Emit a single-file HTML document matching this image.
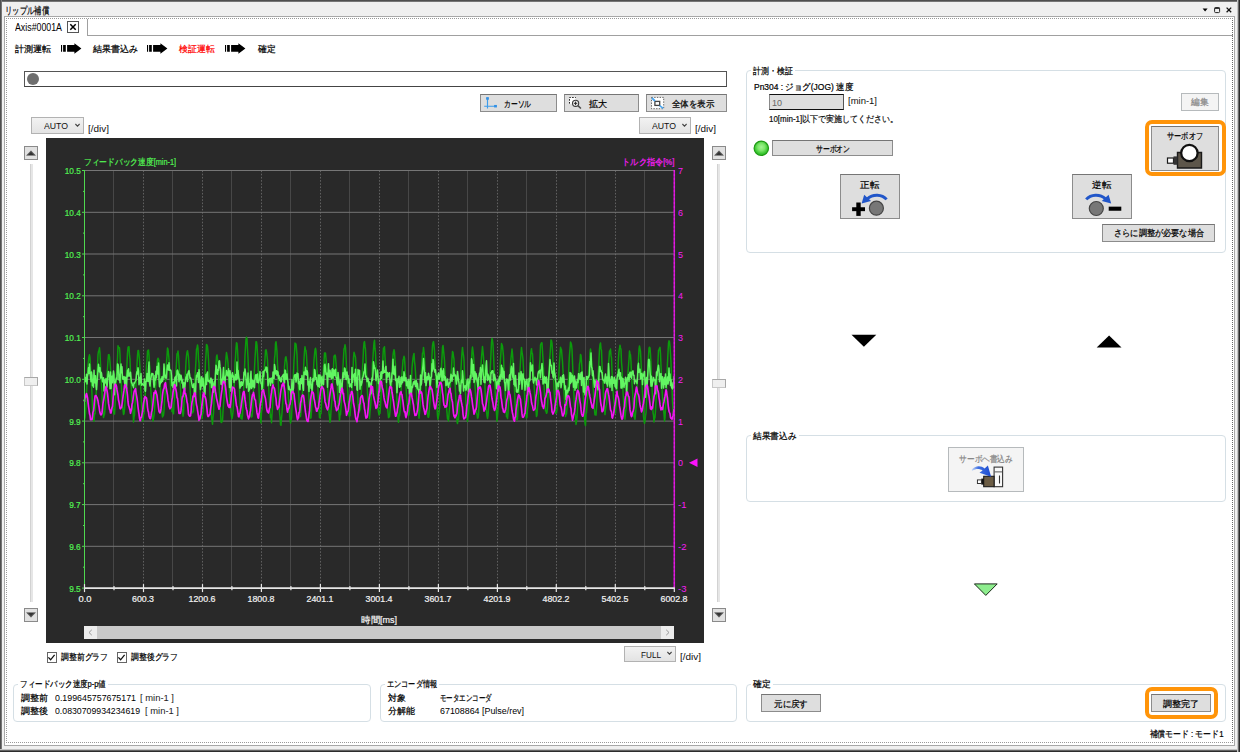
<!DOCTYPE html>
<html lang="ja"><head><meta charset="utf-8"><title>リップル補償</title>
<style>
html,body{margin:0;padding:0;}
body{width:1240px;height:752px;overflow:hidden;background:#fff;position:relative;font-family:"Liberation Sans", sans-serif;}
div,span,svg{position:absolute;box-sizing:border-box;}
.t{white-space:nowrap;line-height:14px;height:14px;font-family:"Liberation Sans", sans-serif;-webkit-text-stroke:0.22px currentColor;}
.btn{background:#dedede;border:1px solid #8c8c8c;border-top-color:#757575;}
.dis{background:#f4f4f4;border:1px solid #b6babc;}
.grp{border:1px solid #d5dfe5;border-radius:4px;}
.combo{border:1px solid #b2b2b2;background:linear-gradient(#f2f2f2,#e3e3e3);}
.hl{border:4px solid #ff9409;border-radius:7px;}
</style></head><body>
<div class="" style="left:0px;top:0px;width:1240px;height:752px;background:#f0f0f0;"></div>
<div class="" style="left:0px;top:0px;width:1240px;height:2px;background:linear-gradient(#3c3c3c,#8a8a8a);"></div>
<div class="" style="left:0px;top:0px;width:2px;height:752px;background:linear-gradient(90deg,#3c3c3c,#8a8a8a);"></div>
<div class="" style="left:0px;top:749px;width:1240px;height:3px;background:linear-gradient(#e2e2e2 0%,#a8a8a8 30%,#3a3a3a 62%,#222 100%);"></div>
<div class="" style="left:1237px;top:0px;width:3px;height:752px;background:linear-gradient(90deg,#e2e2e2 0%,#a8a8a8 35%,#3a3a3a 62%,#222 100%);"></div>
<div class="" style="left:4px;top:16px;width:1231px;height:730px;background:#fff;border:1px solid #a8a8a8;"></div>
<div class="" style="left:6px;top:18px;width:1227px;height:725px;border:1px dotted #999;border-right-color:#666;"></div>
<span id="t0" class="t" style="left:5px;transform-origin:0 50%;top:4.0px;font-size:9.5px;color:#000;font-weight:normal;transform:scaleX(0.7333);">リップル補償</span>
<svg style="left:1198px;top:4px" width="40" height="12" viewBox="0 0 40 12"><path d="M4.6 4.6 L9.6 4.6 L7.1 7.6 Z" fill="#000"/><rect x="16.6" y="3.6" width="5" height="5" rx="1" fill="none" stroke="#222" stroke-width="1"/><path d="M16.6 4.2 H21.6" stroke="#222" stroke-width="1.4"/><path d="M28.6 3.6 L33.2 8.2 M33.2 3.6 L28.6 8.2" stroke="#111" stroke-width="1.3"/></svg>
<div class="" style="left:87px;top:35px;width:1146px;height:1px;background:#a0a0a0;"></div>
<div class="" style="left:87px;top:19px;width:1px;height:17px;background:#a0a0a0;"></div>
<span id="t1" class="t" style="left:15px;transform-origin:0 50%;top:20.5px;font-size:10.21px;color:#000;font-weight:normal;transform:scaleX(0.8629);-webkit-text-stroke:0;">Axis#0001A</span>
<div class="" style="left:67px;top:21px;width:12px;height:12px;border:1px solid #555;background:#fff;"></div>
<svg style="left:67px;top:21px" width="12" height="12" viewBox="0 0 12 12"><path d="M3.3 3.3 L8.7 8.7 M8.7 3.3 L3.3 8.7" stroke="#000" stroke-width="1.5"/></svg>
<span id="t2" class="t" style="left:15px;transform-origin:0 50%;top:41.5px;font-size:9px;color:#000;font-weight:normal;transform:scaleX(1.0000);">計測運転</span>
<svg style="left:61px;top:43px" width="22" height="11" viewBox="0 0 22 11"><path d="M0 2.1 H1.1 V8.7 H0 Z M2.1 2.1 H4.8 V8.7 H2.1 Z M6.1 2.1 H13.4 V0.2 L20.4 5.4 L13.4 10.7 V8.7 H6.1 Z" fill="#000"/></svg>
<span id="t3" class="t" style="left:93px;transform-origin:0 50%;top:41.5px;font-size:9px;color:#000;font-weight:normal;transform:scaleX(1.0000);">結果書込み</span>
<svg style="left:147px;top:43px" width="22" height="11" viewBox="0 0 22 11"><path d="M0 2.1 H1.1 V8.7 H0 Z M2.1 2.1 H4.8 V8.7 H2.1 Z M6.1 2.1 H13.4 V0.2 L20.4 5.4 L13.4 10.7 V8.7 H6.1 Z" fill="#000"/></svg>
<span id="t4" class="t" style="left:179px;transform-origin:0 50%;top:41.5px;font-size:9px;color:#f00;font-weight:normal;transform:scaleX(0.9861);">検証運転</span>
<svg style="left:225px;top:43px" width="22" height="11" viewBox="0 0 22 11"><path d="M0 2.1 H1.1 V8.7 H0 Z M2.1 2.1 H4.8 V8.7 H2.1 Z M6.1 2.1 H13.4 V0.2 L20.4 5.4 L13.4 10.7 V8.7 H6.1 Z" fill="#000"/></svg>
<span id="t5" class="t" style="left:258px;transform-origin:0 50%;top:41.5px;font-size:9px;color:#000;font-weight:normal;transform:scaleX(0.9722);">確定</span>
<div class="" style="left:24px;top:71px;width:703px;height:16px;background:#fff;border:1px solid #555;border-bottom-color:#444;"></div>
<div class="" style="left:27px;top:73px;width:12px;height:12px;background:#6e6e6e;border-radius:50%;"></div>
<div class="btn" style="left:480px;top:94px;width:77px;height:18px;"></div>
<div class="btn" style="left:564px;top:94px;width:75px;height:18px;"></div>
<div class="btn" style="left:646px;top:94px;width:81px;height:18px;"></div>
<span id="t6" class="t" style="left:504px;transform-origin:0 50%;top:96.5px;font-size:9px;color:#000;font-weight:normal;transform:scaleX(0.7500);">カーソル</span>
<span id="t7" class="t" style="left:589px;transform-origin:0 50%;top:96.5px;font-size:9px;color:#000;font-weight:normal;transform:scaleX(1.0000);">拡大</span>
<span id="t8" class="t" style="left:672px;transform-origin:0 50%;top:96.6px;font-size:9px;color:#000;font-weight:normal;transform:scaleX(0.9444);">全体を表示</span>
<svg style="left:483px;top:96px" width="16" height="14" viewBox="0 0 16 14"><path d="M4.5 1.4 V12.6 M1.2 10.2 H13.6" stroke="#3d9cea" stroke-width="1.15" fill="none"/><rect x="3.1" y="1.2" width="2.8" height="2.5" fill="#3191e6"/><rect x="11.1" y="8.95" width="2.8" height="2.5" fill="#3191e6"/></svg>
<svg style="left:568px;top:96px" width="16" height="14" viewBox="0 0 16 14"><rect x="1.4" y="1.4" width="6.2" height="6.4" fill="#fff"/><path d="M1.5 7.6 V1.5 H7.8" stroke="#222" stroke-width="1" stroke-dasharray="1.6 1.3" fill="none"/><circle cx="7.6" cy="7.3" r="3.1" fill="#efefef" stroke="#3a3a3a" stroke-width="1.1"/><path d="M5.9 7.3 H9.3 M7.6 5.6 V9" stroke="#222" stroke-width="1"/><path d="M9.9 9.6 L12.9 12.5" stroke="#4a4a4a" stroke-width="1.5"/></svg>
<svg style="left:650px;top:96px" width="16" height="14" viewBox="0 0 16 14"><rect x="1.5" y="1.4" width="12.2" height="11.3" fill="#fff" stroke="#555" stroke-width="0.9" stroke-dasharray="1.4 1.3"/><rect x="4.9" y="5.4" width="4.8" height="4" fill="#fff" stroke="#444" stroke-width="1.3"/><path d="M2 2 L5 5 M9.6 9.6 L13.2 12.4" stroke="#4ca6ee" stroke-width="1.8"/></svg>
<div class="combo" style="left:31px;top:117px;width:53px;height:17px;"></div>
<span id="t9" class="t" style="left:44px;transform-origin:0 50%;top:119.0px;font-size:9.67px;color:#111;font-weight:normal;transform:scaleX(0.9004);-webkit-text-stroke:0;">AUTO</span>
<svg style="left:74px;top:122.5px" width="7" height="5" viewBox="0 0 7 5"><path d="M1.4 1 L3.5 3.2 L5.6 1" stroke="#444" stroke-width="1.1" fill="none"/></svg>
<span id="t10" class="t" style="left:88px;transform-origin:0 50%;top:121.5px;font-size:9.67px;color:#111;font-weight:normal;transform:scaleX(1.0291);-webkit-text-stroke:0;">[/div]</span>
<div class="combo" style="left:639px;top:117px;width:52px;height:17px;"></div>
<span id="t11" class="t" style="left:652px;transform-origin:0 50%;top:119.0px;font-size:9.67px;color:#111;font-weight:normal;transform:scaleX(0.9004);-webkit-text-stroke:0;">AUTO</span>
<svg style="left:681px;top:122.5px" width="7" height="5" viewBox="0 0 7 5"><path d="M1.4 1 L3.5 3.2 L5.6 1" stroke="#444" stroke-width="1.1" fill="none"/></svg>
<span id="t12" class="t" style="left:695px;transform-origin:0 50%;top:121.5px;font-size:9.67px;color:#111;font-weight:normal;transform:scaleX(1.0291);-webkit-text-stroke:0;">[/div]</span>
<div class="combo" style="left:624px;top:646px;width:52px;height:16px;"></div>
<span id="t13" class="t" style="left:641px;transform-origin:0 50%;top:647.5px;font-size:9.67px;color:#111;font-weight:normal;transform:scaleX(0.8466);-webkit-text-stroke:0;">FULL</span>
<svg style="left:666px;top:651.0px" width="7" height="5" viewBox="0 0 7 5"><path d="M1.4 1 L3.5 3.2 L5.6 1" stroke="#444" stroke-width="1.1" fill="none"/></svg>
<span id="t14" class="t" style="left:680px;transform-origin:0 50%;top:649.5px;font-size:9.67px;color:#111;font-weight:normal;transform:scaleX(1.0291);-webkit-text-stroke:0;">[/div]</span>
<div class="" style="left:24px;top:146px;width:14px;height:14px;background:#e1e1e1;border:1px solid #8a8a8a;"></div>
<svg style="left:24px;top:146px" width="14" height="14" viewBox="0 0 14 14"><path d="M2.2 9.6 L7 4.4 L11.8 9.6 Z" fill="#333"/><path d="M3.2 9.2 L7 5.2 L10.8 9.2" stroke="#777" stroke-width="1" fill="none"/></svg>
<div class="" style="left:30px;top:164px;width:3px;height:438px;background:#e6e6e6;border-left:1px solid #d2d2d2;"></div>
<div class="" style="left:24px;top:377px;width:14px;height:9px;background:#efefef;border:1px solid #a8a8a8;border-left-color:#c8c8c8;border-bottom-color:#c8c8c8;"></div>
<div class="" style="left:24px;top:608px;width:14px;height:14px;background:#e1e1e1;border:1px solid #8a8a8a;"></div>
<svg style="left:24px;top:608px" width="14" height="14" viewBox="0 0 14 14"><path d="M2.2 4.4 L7 9.6 L11.8 4.4 Z" fill="#333"/><path d="M3.2 4.8 L7 8.8 L10.8 4.8" stroke="#777" stroke-width="1" fill="none"/></svg>
<div class="" style="left:712px;top:146px;width:14px;height:14px;background:#e1e1e1;border:1px solid #8a8a8a;"></div>
<svg style="left:712px;top:146px" width="14" height="14" viewBox="0 0 14 14"><path d="M2.2 9.6 L7 4.4 L11.8 9.6 Z" fill="#333"/><path d="M3.2 9.2 L7 5.2 L10.8 9.2" stroke="#777" stroke-width="1" fill="none"/></svg>
<div class="" style="left:717px;top:164px;width:3px;height:438px;background:#e6e6e6;border-left:1px solid #d2d2d2;"></div>
<div class="" style="left:712px;top:379px;width:14px;height:9px;background:#efefef;border:1px solid #a8a8a8;border-left-color:#c8c8c8;border-bottom-color:#c8c8c8;"></div>
<div class="" style="left:712px;top:608px;width:14px;height:14px;background:#e1e1e1;border:1px solid #8a8a8a;"></div>
<svg style="left:712px;top:608px" width="14" height="14" viewBox="0 0 14 14"><path d="M2.2 4.4 L7 9.6 L11.8 4.4 Z" fill="#333"/><path d="M3.2 4.8 L7 8.8 L10.8 4.8" stroke="#777" stroke-width="1" fill="none"/></svg>
<div class="" style="left:46px;top:138px;width:658px;height:505px;background:#292929;"></div>
<svg style="left:46px;top:138px" width="658" height="505" viewBox="46 138 658 505"><path d="M113.5 170.5 V588.1" stroke="#474747" stroke-width="1"/><path d="M143.5 170.5 V588.1" stroke="#606060" stroke-width="1" stroke-dasharray="1.6 1.6"/><path d="M172.5 170.5 V588.1" stroke="#474747" stroke-width="1"/><path d="M202.5 170.5 V588.1" stroke="#606060" stroke-width="1" stroke-dasharray="1.6 1.6"/><path d="M231.5 170.5 V588.1" stroke="#474747" stroke-width="1"/><path d="M261.5 170.5 V588.1" stroke="#606060" stroke-width="1" stroke-dasharray="1.6 1.6"/><path d="M290.5 170.5 V588.1" stroke="#474747" stroke-width="1"/><path d="M320.5 170.5 V588.1" stroke="#606060" stroke-width="1" stroke-dasharray="1.6 1.6"/><path d="M349.5 170.5 V588.1" stroke="#474747" stroke-width="1"/><path d="M379.5 170.5 V588.1" stroke="#606060" stroke-width="1" stroke-dasharray="1.6 1.6"/><path d="M408.5 170.5 V588.1" stroke="#474747" stroke-width="1"/><path d="M438.5 170.5 V588.1" stroke="#606060" stroke-width="1" stroke-dasharray="1.6 1.6"/><path d="M467.5 170.5 V588.1" stroke="#474747" stroke-width="1"/><path d="M497.5 170.5 V588.1" stroke="#606060" stroke-width="1" stroke-dasharray="1.6 1.6"/><path d="M526.5 170.5 V588.1" stroke="#474747" stroke-width="1"/><path d="M556.5 170.5 V588.1" stroke="#606060" stroke-width="1" stroke-dasharray="1.6 1.6"/><path d="M585.5 170.5 V588.1" stroke="#474747" stroke-width="1"/><path d="M615.5 170.5 V588.1" stroke="#606060" stroke-width="1" stroke-dasharray="1.6 1.6"/><path d="M644.5 170.5 V588.1" stroke="#474747" stroke-width="1"/><path d="M84.5 170.5 H674.3" stroke="#767676" stroke-width="1"/><path d="M84.5 212.3 H674.3" stroke="#767676" stroke-width="1"/><path d="M84.5 254.0 H674.3" stroke="#767676" stroke-width="1"/><path d="M84.5 295.8 H674.3" stroke="#767676" stroke-width="1"/><path d="M84.5 337.5 H674.3" stroke="#767676" stroke-width="1"/><path d="M84.5 379.3 H674.3" stroke="#767676" stroke-width="1"/><path d="M84.5 421.1 H674.3" stroke="#767676" stroke-width="1"/><path d="M84.5 462.8 H674.3" stroke="#767676" stroke-width="1"/><path d="M84.5 504.6 H674.3" stroke="#767676" stroke-width="1"/><path d="M84.5 546.3 H674.3" stroke="#767676" stroke-width="1"/><path d="M84.5 419.5 L85.0 417.9 L85.5 413.1 L86.0 404.5 L86.5 393.7 L87.0 379.7 L87.5 374.9 L88.0 365.2 L88.5 360.4 L89.0 356.6 L89.5 354.8 L90.0 357.9 L90.5 368.0 L91.0 373.7 L91.5 384.0 L92.0 394.5 L92.5 407.4 L93.0 416.3 L93.5 420.1 L94.0 421.3 L94.5 413.6 L95.0 413.9 L95.5 404.8 L96.0 396.6 L96.5 388.4 L97.0 373.4 L97.5 366.6 L98.0 354.5 L98.5 351.3 L99.0 350.5 L99.5 347.8 L100.0 353.4 L100.5 364.3 L101.0 376.3 L101.5 384.2 L102.0 392.7 L102.5 405.5 L103.0 410.6 L103.5 417.5 L104.0 415.7 L104.5 414.2 L105.0 409.1 L105.5 402.8 L106.0 392.2 L106.5 383.1 L107.0 374.6 L107.5 368.3 L108.0 360.5 L108.5 354.8 L109.0 354.6 L109.5 356.6 L110.0 361.8 L110.5 368.5 L111.0 380.1 L111.5 386.1 L112.0 397.2 L112.5 406.7 L113.0 407.1 L113.5 411.2 L114.0 414.0 L114.5 414.1 L115.0 405.2 L115.5 398.2 L116.0 388.7 L116.5 375.9 L117.0 366.1 L117.5 358.1 L118.0 345.8 L118.5 347.8 L119.0 347.6 L119.5 347.7 L120.0 354.5 L120.5 369.1 L121.0 378.1 L121.5 388.0 L122.0 396.7 L122.5 407.2 L123.0 409.8 L123.5 414.4 L124.0 413.7 L124.5 408.8 L125.0 402.2 L125.5 393.0 L126.0 384.7 L126.5 373.0 L127.0 363.5 L127.5 353.1 L128.0 347.7 L128.5 346.7 L129.0 346.7 L129.5 355.2 L130.0 359.2 L130.5 372.9 L131.0 380.2 L131.5 392.8 L132.0 400.9 L132.5 404.8 L133.0 409.1 L133.5 422.0 L134.0 417.2 L134.5 415.1 L135.0 405.2 L135.5 396.2 L136.0 384.2 L136.5 372.4 L137.0 365.1 L137.5 355.5 L138.0 350.6 L138.5 350.6 L139.0 354.9 L139.5 359.8 L140.0 368.4 L140.5 382.9 L141.0 393.3 L141.5 402.6 L142.0 410.6 L142.5 416.3 L143.0 421.3 L143.5 413.9 L144.0 413.8 L144.5 405.2 L145.0 399.1 L145.5 386.9 L146.0 380.2 L146.5 365.9 L147.0 361.3 L147.5 351.2 L148.0 350.4 L148.5 350.0 L149.0 355.9 L149.5 364.4 L150.0 368.5 L150.5 383.8 L151.0 392.5 L151.5 400.1 L152.0 410.6 L152.5 417.6 L153.0 421.0 L153.5 418.3 L154.0 415.3 L154.5 411.1 L155.0 402.1 L155.5 388.0 L156.0 381.1 L156.5 372.0 L157.0 366.2 L157.5 359.8 L158.0 358.2 L158.5 359.2 L159.0 361.5 L159.5 368.2 L160.0 382.7 L160.5 388.5 L161.0 402.2 L161.5 408.0 L162.0 412.8 L162.5 417.0 L163.0 416.0 L163.5 415.1 L164.0 410.1 L164.5 401.4 L165.0 394.3 L165.5 383.2 L166.0 369.2 L166.5 362.7 L167.0 356.0 L167.5 348.1 L168.0 349.3 L168.5 354.1 L169.0 359.0 L169.5 364.8 L170.0 375.5 L170.5 386.3 L171.0 393.7 L171.5 401.3 L172.0 411.6 L172.5 409.8 L173.0 412.4 L173.5 413.7 L174.0 403.0 L174.5 400.0 L175.0 387.4 L175.5 378.5 L176.0 370.6 L176.5 361.9 L177.0 353.9 L177.5 353.4 L178.0 351.0 L178.5 355.9 L179.0 363.8 L179.5 372.5 L180.0 380.8 L180.5 388.2 L181.0 400.2 L181.5 403.3 L182.0 408.2 L182.5 411.5 L183.0 416.2 L183.5 413.6 L184.0 401.9 L184.5 398.3 L185.0 383.1 L185.5 372.1 L186.0 362.1 L186.5 355.6 L187.0 352.3 L187.5 350.7 L188.0 353.4 L188.5 357.3 L189.0 365.0 L189.5 375.2 L190.0 386.0 L190.5 396.0 L191.0 407.1 L191.5 408.8 L192.0 413.1 L192.5 412.8 L193.0 412.1 L193.5 411.0 L194.0 399.4 L194.5 391.9 L195.0 376.7 L195.5 368.8 L196.0 360.5 L196.5 349.3 L197.0 348.0 L197.5 344.9 L198.0 348.4 L198.5 359.3 L199.0 363.2 L199.5 378.3 L200.0 388.3 L200.5 400.5 L201.0 406.8 L201.5 413.2 L202.0 418.8 L202.5 413.5 L203.0 413.1 L203.5 404.8 L204.0 393.5 L204.5 383.8 L205.0 376.5 L205.5 361.2 L206.0 355.1 L206.5 344.5 L207.0 345.0 L207.5 346.5 L208.0 352.1 L208.5 359.5 L209.0 370.0 L209.5 378.9 L210.0 392.5 L210.5 403.0 L211.0 410.0 L211.5 416.5 L212.0 420.6 L212.5 424.2 L213.0 416.8 L213.5 413.2 L214.0 400.2 L214.5 391.0 L215.0 379.0 L215.5 371.6 L216.0 364.7 L216.5 356.6 L217.0 354.9 L217.5 359.7 L218.0 360.7 L218.5 369.9 L219.0 384.2 L219.5 393.3 L220.0 404.6 L220.5 411.3 L221.0 421.9 L221.5 422.5 L222.0 421.5 L222.5 421.0 L223.0 411.3 L223.5 404.4 L224.0 398.5 L224.5 384.9 L225.0 374.6 L225.5 365.9 L226.0 357.6 L226.5 352.6 L227.0 355.4 L227.5 358.7 L228.0 363.1 L228.5 370.6 L229.0 380.0 L229.5 392.1 L230.0 404.0 L230.5 408.6 L231.0 412.8 L231.5 416.0 L232.0 418.5 L232.5 415.8 L233.0 411.6 L233.5 400.7 L234.0 390.6 L234.5 379.8 L235.0 362.9 L235.5 357.4 L236.0 348.2 L236.5 342.8 L237.0 343.4 L237.5 349.5 L238.0 359.7 L238.5 369.5 L239.0 382.3 L239.5 390.2 L240.0 399.8 L240.5 412.0 L241.0 418.4 L241.5 418.4 L242.0 419.1 L242.5 415.2 L243.0 404.7 L243.5 392.4 L244.0 380.6 L244.5 369.1 L245.0 355.0 L245.5 346.9 L246.0 339.3 L246.5 337.3 L247.0 339.0 L247.5 349.4 L248.0 357.9 L248.5 371.1 L249.0 383.0 L249.5 393.2 L250.0 405.8 L250.5 414.6 L251.0 415.5 L251.5 417.1 L252.0 416.3 L252.5 411.8 L253.0 400.1 L253.5 389.5 L254.0 379.3 L254.5 368.5 L255.0 358.3 L255.5 350.2 L256.0 341.8 L256.5 341.8 L257.0 345.3 L257.5 354.1 L258.0 363.2 L258.5 377.3 L259.0 390.3 L259.5 403.0 L260.0 412.7 L260.5 417.6 L261.0 422.9 L261.5 412.0 L262.0 409.6 L262.5 402.5 L263.0 394.0 L263.5 388.8 L264.0 378.8 L264.5 365.4 L265.0 359.0 L265.5 350.4 L266.0 349.7 L266.5 351.5 L267.0 355.7 L267.5 360.1 L268.0 372.2 L268.5 383.2 L269.0 394.5 L269.5 400.4 L270.0 411.5 L270.5 417.6 L271.0 415.0 L271.5 422.7 L272.0 414.2 L272.5 407.3 L273.0 396.9 L273.5 384.2 L274.0 373.6 L274.5 358.8 L275.0 354.5 L275.5 343.5 L276.0 341.7 L276.5 346.3 L277.0 352.1 L277.5 364.8 L278.0 373.4 L278.5 386.0 L279.0 400.1 L279.5 412.4 L280.0 416.6 L280.5 424.8 L281.0 425.2 L281.5 418.2 L282.0 413.0 L282.5 405.2 L283.0 398.8 L283.5 390.1 L284.0 380.0 L284.5 366.8 L285.0 361.1 L285.5 357.4 L286.0 356.8 L286.5 360.0 L287.0 363.6 L287.5 372.6 L288.0 385.1 L288.5 397.7 L289.0 403.8 L289.5 413.4 L290.0 419.1 L290.5 423.1 L291.0 420.0 L291.5 418.1 L292.0 406.6 L292.5 400.8 L293.0 385.6 L293.5 372.6 L294.0 360.2 L294.5 353.5 L295.0 343.0 L295.5 343.9 L296.0 343.9 L296.5 349.1 L297.0 355.0 L297.5 368.7 L298.0 380.5 L298.5 388.8 L299.0 400.8 L299.5 410.4 L300.0 413.0 L300.5 416.5 L301.0 411.5 L301.5 407.2 L302.0 401.5 L302.5 392.2 L303.0 381.1 L303.5 369.8 L304.0 359.2 L304.5 351.3 L305.0 346.8 L305.5 350.1 L306.0 350.6 L306.5 355.9 L307.0 364.2 L307.5 373.6 L308.0 380.1 L308.5 389.7 L309.0 398.6 L309.5 406.3 L310.0 410.9 L310.5 418.2 L311.0 417.9 L311.5 410.1 L312.0 400.2 L312.5 391.3 L313.0 381.7 L313.5 369.6 L314.0 360.2 L314.5 354.6 L315.0 349.8 L315.5 348.2 L316.0 350.9 L316.5 359.7 L317.0 369.7 L317.5 378.3 L318.0 391.9 L318.5 401.7 L319.0 408.6 L319.5 417.6 L320.0 417.8 L320.5 413.4 L321.0 413.7 L321.5 404.2 L322.0 396.8 L322.5 388.2 L323.0 378.0 L323.5 367.7 L324.0 362.8 L324.5 353.1 L325.0 353.0 L325.5 353.0 L326.0 358.4 L326.5 364.6 L327.0 374.6 L327.5 383.7 L328.0 396.3 L328.5 404.7 L329.0 412.8 L329.5 416.6 L330.0 422.2 L330.5 419.4 L331.0 410.8 L331.5 404.8 L332.0 398.9 L332.5 385.5 L333.0 378.6 L333.5 366.8 L334.0 356.1 L334.5 356.8 L335.0 355.0 L335.5 356.8 L336.0 363.1 L336.5 369.3 L337.0 377.4 L337.5 389.1 L338.0 398.5 L338.5 408.6 L339.0 412.8 L339.5 420.4 L340.0 414.9 L340.5 414.7 L341.0 407.6 L341.5 398.6 L342.0 391.6 L342.5 377.2 L343.0 366.0 L343.5 357.8 L344.0 349.1 L344.5 347.7 L345.0 344.8 L345.5 347.5 L346.0 355.8 L346.5 367.7 L347.0 377.3 L347.5 386.6 L348.0 396.1 L348.5 407.0 L349.0 414.5 L349.5 416.3 L350.0 415.6 L350.5 409.5 L351.0 405.7 L351.5 397.8 L352.0 391.6 L352.5 376.4 L353.0 370.3 L353.5 358.0 L354.0 352.2 L354.5 354.0 L355.0 355.7 L355.5 357.4 L356.0 366.6 L356.5 375.1 L357.0 382.3 L357.5 391.3 L358.0 402.8 L358.5 409.1 L359.0 412.6 L359.5 411.2 L360.0 409.9 L360.5 409.1 L361.0 396.6 L361.5 389.3 L362.0 380.2 L362.5 368.4 L363.0 360.4 L363.5 349.0 L364.0 342.7 L364.5 341.6 L365.0 346.2 L365.5 349.5 L366.0 360.8 L366.5 369.1 L367.0 383.2 L367.5 392.9 L368.0 400.1 L368.5 404.1 L369.0 409.8 L369.5 418.5 L370.0 411.2 L370.5 407.6 L371.0 400.4 L371.5 385.0 L372.0 377.4 L372.5 363.2 L373.0 357.3 L373.5 349.0 L374.0 342.6 L374.5 340.3 L375.0 348.7 L375.5 352.7 L376.0 366.4 L376.5 376.9 L377.0 386.3 L377.5 400.2 L378.0 408.1 L378.5 412.1 L379.0 414.9 L379.5 413.0 L380.0 413.3 L380.5 406.3 L381.0 396.2 L381.5 386.8 L382.0 374.3 L382.5 366.2 L383.0 355.0 L383.5 347.9 L384.0 347.9 L384.5 346.7 L385.0 356.7 L385.5 365.1 L386.0 374.3 L386.5 383.2 L387.0 397.0 L387.5 407.1 L388.0 412.2 L388.5 417.7 L389.0 416.9 L389.5 416.7 L390.0 410.9 L390.5 404.0 L391.0 393.6 L391.5 386.6 L392.0 370.9 L392.5 361.6 L393.0 355.2 L393.5 351.7 L394.0 349.7 L394.5 352.0 L395.0 359.9 L395.5 364.4 L396.0 375.7 L396.5 388.7 L397.0 401.9 L397.5 409.4 L398.0 417.5 L398.5 422.3 L399.0 416.1 L399.5 415.8 L400.0 411.7 L400.5 403.8 L401.0 395.3 L401.5 382.3 L402.0 373.9 L402.5 366.7 L403.0 360.4 L403.5 358.5 L404.0 356.3 L404.5 357.9 L405.0 366.1 L405.5 375.4 L406.0 386.1 L406.5 395.7 L407.0 400.5 L407.5 406.2 L408.0 414.7 L408.5 415.4 L409.0 414.7 L409.5 410.0 L410.0 404.6 L410.5 395.9 L411.0 388.4 L411.5 378.8 L412.0 367.9 L412.5 362.6 L413.0 358.1 L413.5 355.2 L414.0 353.4 L414.5 361.3 L415.0 365.7 L415.5 372.2 L416.0 382.0 L416.5 393.5 L417.0 403.8 L417.5 404.9 L418.0 408.3 L418.5 411.4 L419.0 418.2 L419.5 412.8 L420.0 406.9 L420.5 396.0 L421.0 385.5 L421.5 371.3 L422.0 362.1 L422.5 353.0 L423.0 353.0 L423.5 347.4 L424.0 352.1 L424.5 357.4 L425.0 368.0 L425.5 377.4 L426.0 390.2 L426.5 399.2 L427.0 408.1 L427.5 412.6 L428.0 416.9 L428.5 417.3 L429.0 415.0 L429.5 406.6 L430.0 400.9 L430.5 387.2 L431.0 378.7 L431.5 362.8 L432.0 355.1 L432.5 345.6 L433.0 342.7 L433.5 341.6 L434.0 345.4 L434.5 351.3 L435.0 361.8 L435.5 375.3 L436.0 385.4 L436.5 397.9 L437.0 406.1 L437.5 416.1 L438.0 419.5 L438.5 416.3 L439.0 413.5 L439.5 408.3 L440.0 398.4 L440.5 387.6 L441.0 375.7 L441.5 366.4 L442.0 357.3 L442.5 347.4 L443.0 345.4 L443.5 349.9 L444.0 355.0 L444.5 360.6 L445.0 371.9 L445.5 383.3 L446.0 397.5 L446.5 406.8 L447.0 412.4 L447.5 419.0 L448.0 418.1 L448.5 421.0 L449.0 414.0 L449.5 407.7 L450.0 395.7 L450.5 383.8 L451.0 373.1 L451.5 368.0 L452.0 358.2 L452.5 351.5 L453.0 352.4 L453.5 356.5 L454.0 359.3 L454.5 371.5 L455.0 381.0 L455.5 390.9 L456.0 402.0 L456.5 412.0 L457.0 421.3 L457.5 423.5 L458.0 419.7 L458.5 419.8 L459.0 409.3 L459.5 402.1 L460.0 390.9 L460.5 378.9 L461.0 369.3 L461.5 360.0 L462.0 352.5 L462.5 347.4 L463.0 352.7 L463.5 355.3 L464.0 360.4 L464.5 373.5 L465.0 383.8 L465.5 392.1 L466.0 405.2 L466.5 409.5 L467.0 415.6 L467.5 421.4 L468.0 417.2 L468.5 414.3 L469.0 406.2 L469.5 400.0 L470.0 389.9 L470.5 377.8 L471.0 367.2 L471.5 360.8 L472.0 350.9 L472.5 347.0 L473.0 351.1 L473.5 355.6 L474.0 362.7 L474.5 372.5 L475.0 386.2 L475.5 392.7 L476.0 403.1 L476.5 413.0 L477.0 414.1 L477.5 418.2 L478.0 417.9 L478.5 414.7 L479.0 404.6 L479.5 393.1 L480.0 384.4 L480.5 372.7 L481.0 364.9 L481.5 357.3 L482.0 351.7 L482.5 346.6 L483.0 351.6 L483.5 357.0 L484.0 366.2 L484.5 373.9 L485.0 387.6 L485.5 399.5 L486.0 406.8 L486.5 410.9 L487.0 415.9 L487.5 418.4 L488.0 415.7 L488.5 408.5 L489.0 397.5 L489.5 387.0 L490.0 374.5 L490.5 363.6 L491.0 353.0 L491.5 342.3 L492.0 338.4 L492.5 340.5 L493.0 344.7 L493.5 355.3 L494.0 366.3 L494.5 376.6 L495.0 387.5 L495.5 397.4 L496.0 407.7 L496.5 413.4 L497.0 421.2 L497.5 415.9 L498.0 409.7 L498.5 402.0 L499.0 392.9 L499.5 380.1 L500.0 369.4 L500.5 358.9 L501.0 351.6 L501.5 343.6 L502.0 344.8 L502.5 346.4 L503.0 351.1 L503.5 356.3 L504.0 371.9 L504.5 382.8 L505.0 391.5 L505.5 400.7 L506.0 409.1 L506.5 416.8 L507.0 416.0 L507.5 418.4 L508.0 412.6 L508.5 402.7 L509.0 394.7 L509.5 386.5 L510.0 377.0 L510.5 364.9 L511.0 358.1 L511.5 353.7 L512.0 349.0 L512.5 353.7 L513.0 360.9 L513.5 369.6 L514.0 383.0 L514.5 389.1 L515.0 400.9 L515.5 408.8 L516.0 415.9 L516.5 419.1 L517.0 419.9 L517.5 418.8 L518.0 407.5 L518.5 403.4 L519.0 393.8 L519.5 380.8 L520.0 370.8 L520.5 361.4 L521.0 353.1 L521.5 347.4 L522.0 352.0 L522.5 355.0 L523.0 359.4 L523.5 368.9 L524.0 385.0 L524.5 392.2 L525.0 405.3 L525.5 411.0 L526.0 414.7 L526.5 418.1 L527.0 417.4 L527.5 409.3 L528.0 406.7 L528.5 395.4 L529.0 387.1 L529.5 378.2 L530.0 365.6 L530.5 357.5 L531.0 351.3 L531.5 348.7 L532.0 353.1 L532.5 353.9 L533.0 363.5 L533.5 372.2 L534.0 383.9 L534.5 391.7 L535.0 402.9 L535.5 408.8 L536.0 410.1 L536.5 416.6 L537.0 415.2 L537.5 407.4 L538.0 402.8 L538.5 389.9 L539.0 379.4 L539.5 365.4 L540.0 359.0 L540.5 345.1 L541.0 343.8 L541.5 342.7 L542.0 343.0 L542.5 351.4 L543.0 359.6 L543.5 368.4 L544.0 384.0 L544.5 395.0 L545.0 401.8 L545.5 410.9 L546.0 410.7 L546.5 413.3 L547.0 412.5 L547.5 407.1 L548.0 396.4 L548.5 387.0 L549.0 371.9 L549.5 360.0 L550.0 355.1 L550.5 348.0 L551.0 340.1 L551.5 340.6 L552.0 343.4 L552.5 350.6 L553.0 361.8 L553.5 374.9 L554.0 388.8 L554.5 398.1 L555.0 405.6 L555.5 413.2 L556.0 412.5 L556.5 413.0 L557.0 409.3 L557.5 399.7 L558.0 395.2 L558.5 385.9 L559.0 372.4 L559.5 361.8 L560.0 354.6 L560.5 347.3 L561.0 348.6 L561.5 349.8 L562.0 356.3 L562.5 361.5 L563.0 371.3 L563.5 384.4 L564.0 391.3 L564.5 401.0 L565.0 408.9 L565.5 416.5 L566.0 414.3 L566.5 414.0 L567.0 407.9 L567.5 398.9 L568.0 389.7 L568.5 378.7 L569.0 363.1 L569.5 354.9 L570.0 349.1 L570.5 342.1 L571.0 343.0 L571.5 344.9 L572.0 349.3 L572.5 362.0 L573.0 375.1 L573.5 387.3 L574.0 396.3 L574.5 406.7 L575.0 413.4 L575.5 415.4 L576.0 424.4 L576.5 421.5 L577.0 417.7 L577.5 409.1 L578.0 397.7 L578.5 383.5 L579.0 372.7 L579.5 363.9 L580.0 361.6 L580.5 354.4 L581.0 355.3 L581.5 361.0 L582.0 369.5 L582.5 378.1 L583.0 390.8 L583.5 399.2 L584.0 407.8 L584.5 417.6 L585.0 423.3 L585.5 425.5 L586.0 414.0 L586.5 412.6 L587.0 405.3 L587.5 399.2 L588.0 385.1 L588.5 375.1 L589.0 365.7 L589.5 361.3 L590.0 352.8 L590.5 349.0 L591.0 352.6 L591.5 358.8 L592.0 366.6 L592.5 374.5 L593.0 386.0 L593.5 392.7 L594.0 406.0 L594.5 410.2 L595.0 414.8 L595.5 413.7 L596.0 415.1 L596.5 408.3 L597.0 398.9 L597.5 388.7 L598.0 376.7 L598.5 370.4 L599.0 360.3 L599.5 349.2 L600.0 344.6 L600.5 342.9 L601.0 348.4 L601.5 350.6 L602.0 364.4 L602.5 373.2 L603.0 381.4 L603.5 396.8 L604.0 401.0 L604.5 408.8 L605.0 414.6 L605.5 409.7 L606.0 406.1 L606.5 404.1 L607.0 395.5 L607.5 385.1 L608.0 378.8 L608.5 364.4 L609.0 358.3 L609.5 351.0 L610.0 351.8 L610.5 349.1 L611.0 355.4 L611.5 357.8 L612.0 371.2 L612.5 379.0 L613.0 390.4 L613.5 398.0 L614.0 401.9 L614.5 407.9 L615.0 408.6 L615.5 412.9 L616.0 405.3 L616.5 400.4 L617.0 392.6 L617.5 381.4 L618.0 369.9 L618.5 357.6 L619.0 351.5 L619.5 348.3 L620.0 345.2 L620.5 347.9 L621.0 349.3 L621.5 362.4 L622.0 367.8 L622.5 381.9 L623.0 392.1 L623.5 399.8 L624.0 409.4 L624.5 410.7 L625.0 419.2 L625.5 412.0 L626.0 409.1 L626.5 401.3 L627.0 397.0 L627.5 384.6 L628.0 372.5 L628.5 365.8 L629.0 359.5 L629.5 351.0 L630.0 353.4 L630.5 354.9 L631.0 361.8 L631.5 373.6 L632.0 383.4 L632.5 390.5 L633.0 399.3 L633.5 408.2 L634.0 416.5 L634.5 417.2 L635.0 419.3 L635.5 413.6 L636.0 408.0 L636.5 401.3 L637.0 387.9 L637.5 379.4 L638.0 366.5 L638.5 358.6 L639.0 349.2 L639.5 345.9 L640.0 348.6 L640.5 351.3 L641.0 361.3 L641.5 372.2 L642.0 384.2 L642.5 393.4 L643.0 403.4 L643.5 416.3 L644.0 420.6 L644.5 423.3 L645.0 421.2 L645.5 416.2 L646.0 412.8 L646.5 400.4 L647.0 386.0 L647.5 377.7 L648.0 364.4 L648.5 356.0 L649.0 348.2 L649.5 347.2 L650.0 347.9 L650.5 354.6 L651.0 363.9 L651.5 377.8 L652.0 387.2 L652.5 397.1 L653.0 412.5 L653.5 415.0 L654.0 421.9 L654.5 418.8 L655.0 417.2 L655.5 410.4 L656.0 401.7 L656.5 393.2 L657.0 380.3 L657.5 369.8 L658.0 361.1 L658.5 350.3 L659.0 349.9 L659.5 348.3 L660.0 347.3 L660.5 353.8 L661.0 365.7 L661.5 376.5 L662.0 388.2 L662.5 397.4 L663.0 404.0 L663.5 410.2 L664.0 413.8 L664.5 421.1 L665.0 417.7 L665.5 407.6 L666.0 398.7 L666.5 388.5 L667.0 374.0 L667.5 362.4 L668.0 352.5 L668.5 343.1 L669.0 340.8 L669.5 341.6 L670.0 346.4 L670.5 353.7 L671.0 362.5 L671.5 379.8 L672.0 387.7 L672.5 401.6 L673.0 408.1 L673.5 418.1 L674.0 418.5" stroke="#0c9a0c" stroke-width="1.5" fill="none" stroke-linejoin="round"/><path d="M84.5 383.1 L85.0 379.7 L85.5 377.4 L86.0 381.5 L86.5 374.3 L87.0 384.0 L87.5 375.7 L88.0 373.9 L88.5 367.7 L89.0 373.2 L89.5 364.0 L90.0 373.2 L90.5 376.6 L91.0 381.7 L91.5 371.9 L92.0 375.7 L92.5 385.8 L93.0 380.0 L93.5 387.2 L94.0 370.3 L94.5 382.2 L95.0 382.9 L95.5 375.7 L96.0 386.4 L96.5 389.6 L97.0 382.8 L97.5 377.5 L98.0 370.3 L98.5 364.3 L99.0 368.5 L99.5 372.0 L100.0 367.7 L100.5 378.1 L101.0 372.2 L101.5 373.2 L102.0 377.2 L102.5 381.4 L103.0 382.0 L103.5 377.7 L104.0 390.9 L104.5 380.1 L105.0 383.0 L105.5 382.3 L106.0 378.4 L106.5 382.9 L107.0 387.1 L107.5 381.9 L108.0 374.3 L108.5 371.4 L109.0 376.6 L109.5 376.6 L110.0 388.7 L110.5 372.0 L111.0 388.4 L111.5 380.6 L112.0 376.2 L112.5 382.7 L113.0 375.6 L113.5 371.1 L114.0 374.4 L114.5 394.7 L115.0 382.3 L115.5 382.4 L116.0 379.6 L116.5 377.8 L117.0 379.1 L117.5 364.1 L118.0 364.2 L118.5 366.9 L119.0 379.9 L119.5 375.4 L120.0 382.7 L120.5 371.1 L121.0 364.0 L121.5 372.7 L122.0 366.7 L122.5 378.2 L123.0 379.0 L123.5 379.2 L124.0 376.4 L124.5 382.3 L125.0 384.6 L125.5 377.2 L126.0 378.2 L126.5 388.8 L127.0 376.1 L127.5 370.2 L128.0 376.4 L128.5 368.8 L129.0 375.6 L129.5 373.9 L130.0 376.3 L130.5 372.2 L131.0 378.3 L131.5 383.0 L132.0 382.8 L132.5 385.6 L133.0 384.8 L133.5 387.7 L134.0 382.7 L134.5 383.3 L135.0 382.0 L135.5 381.0 L136.0 380.1 L136.5 374.3 L137.0 371.7 L137.5 374.0 L138.0 367.7 L138.5 371.0 L139.0 384.8 L139.5 377.4 L140.0 383.0 L140.5 379.6 L141.0 373.6 L141.5 385.2 L142.0 384.4 L142.5 383.9 L143.0 385.0 L143.5 384.7 L144.0 385.4 L144.5 379.0 L145.0 390.6 L145.5 391.1 L146.0 381.5 L146.5 381.3 L147.0 373.6 L147.5 377.0 L148.0 381.4 L148.5 369.2 L149.0 362.0 L149.5 383.2 L150.0 386.1 L150.5 380.2 L151.0 377.8 L151.5 374.4 L152.0 373.4 L152.5 374.6 L153.0 373.9 L153.5 381.3 L154.0 387.3 L154.5 384.9 L155.0 375.6 L155.5 379.9 L156.0 371.2 L156.5 377.6 L157.0 366.4 L157.5 366.4 L158.0 373.9 L158.5 363.1 L159.0 379.6 L159.5 386.7 L160.0 382.6 L160.5 383.7 L161.0 379.0 L161.5 382.3 L162.0 376.7 L162.5 381.2 L163.0 379.3 L163.5 375.2 L164.0 363.9 L164.5 372.5 L165.0 378.0 L165.5 377.5 L166.0 375.3 L166.5 378.1 L167.0 368.9 L167.5 364.9 L168.0 366.1 L168.5 370.1 L169.0 362.8 L169.5 370.2 L170.0 370.2 L170.5 370.1 L171.0 370.7 L171.5 375.7 L172.0 385.7 L172.5 382.8 L173.0 387.4 L173.5 381.9 L174.0 383.6 L174.5 380.9 L175.0 377.2 L175.5 380.7 L176.0 376.2 L176.5 386.0 L177.0 370.9 L177.5 370.1 L178.0 371.4 L178.5 375.4 L179.0 381.8 L179.5 374.3 L180.0 378.8 L180.5 379.8 L181.0 375.2 L181.5 377.8 L182.0 383.1 L182.5 380.2 L183.0 387.9 L183.5 387.1 L184.0 382.7 L184.5 390.7 L185.0 385.3 L185.5 381.4 L186.0 377.0 L186.5 378.1 L187.0 374.2 L187.5 381.5 L188.0 373.5 L188.5 371.4 L189.0 370.6 L189.5 374.2 L190.0 378.2 L190.5 377.5 L191.0 378.9 L191.5 381.8 L192.0 385.0 L192.5 387.4 L193.0 387.3 L193.5 385.2 L194.0 383.5 L194.5 396.5 L195.0 389.4 L195.5 394.6 L196.0 379.6 L196.5 375.3 L197.0 376.9 L197.5 372.7 L198.0 375.5 L198.5 382.5 L199.0 369.7 L199.5 376.0 L200.0 382.2 L200.5 389.6 L201.0 385.7 L201.5 376.7 L202.0 386.1 L202.5 383.7 L203.0 378.0 L203.5 384.8 L204.0 388.0 L204.5 393.5 L205.0 394.2 L205.5 381.5 L206.0 374.4 L206.5 384.6 L207.0 373.4 L207.5 371.9 L208.0 381.0 L208.5 381.4 L209.0 380.8 L209.5 380.7 L210.0 382.7 L210.5 379.0 L211.0 378.1 L211.5 387.6 L212.0 379.4 L212.5 382.1 L213.0 384.9 L213.5 392.3 L214.0 387.0 L214.5 381.3 L215.0 386.6 L215.5 373.4 L216.0 365.2 L216.5 366.7 L217.0 373.9 L217.5 374.3 L218.0 369.5 L218.5 370.4 L219.0 361.4 L219.5 360.9 L220.0 366.4 L220.5 369.4 L221.0 384.2 L221.5 379.3 L222.0 384.8 L222.5 381.6 L223.0 374.0 L223.5 367.6 L224.0 380.0 L224.5 379.3 L225.0 382.5 L225.5 376.2 L226.0 375.9 L226.5 370.6 L227.0 373.0 L227.5 374.7 L228.0 376.1 L228.5 368.7 L229.0 376.5 L229.5 387.5 L230.0 370.7 L230.5 374.7 L231.0 391.2 L231.5 378.9 L232.0 375.3 L232.5 372.8 L233.0 377.0 L233.5 375.9 L234.0 382.5 L234.5 377.2 L235.0 380.1 L235.5 374.4 L236.0 375.7 L236.5 379.7 L237.0 361.9 L237.5 378.2 L238.0 370.6 L238.5 375.8 L239.0 379.0 L239.5 380.7 L240.0 388.1 L240.5 382.5 L241.0 386.5 L241.5 381.7 L242.0 383.5 L242.5 385.3 L243.0 383.1 L243.5 380.7 L244.0 372.3 L244.5 374.8 L245.0 369.0 L245.5 372.6 L246.0 378.1 L246.5 387.7 L247.0 380.1 L247.5 384.4 L248.0 373.1 L248.5 391.2 L249.0 383.6 L249.5 389.8 L250.0 387.3 L250.5 377.6 L251.0 371.2 L251.5 388.5 L252.0 385.9 L252.5 380.6 L253.0 386.7 L253.5 385.0 L254.0 380.6 L254.5 387.8 L255.0 379.3 L255.5 375.3 L256.0 374.6 L256.5 376.7 L257.0 382.4 L257.5 374.0 L258.0 381.8 L258.5 382.9 L259.0 380.8 L259.5 379.3 L260.0 371.5 L260.5 377.7 L261.0 383.6 L261.5 383.4 L262.0 390.0 L262.5 384.0 L263.0 371.6 L263.5 376.5 L264.0 371.6 L264.5 370.3 L265.0 370.0 L265.5 369.7 L266.0 366.9 L266.5 371.9 L267.0 367.5 L267.5 374.5 L268.0 385.7 L268.5 383.5 L269.0 379.5 L269.5 379.5 L270.0 378.4 L270.5 385.5 L271.0 379.4 L271.5 378.1 L272.0 380.6 L272.5 383.1 L273.0 372.1 L273.5 373.5 L274.0 378.5 L274.5 364.4 L275.0 367.0 L275.5 373.9 L276.0 370.7 L276.5 371.0 L277.0 375.6 L277.5 371.3 L278.0 372.4 L278.5 378.6 L279.0 375.5 L279.5 380.2 L280.0 377.4 L280.5 381.5 L281.0 381.9 L281.5 381.2 L282.0 376.4 L282.5 376.2 L283.0 375.1 L283.5 374.4 L284.0 381.8 L284.5 382.9 L285.0 370.1 L285.5 370.9 L286.0 379.3 L286.5 374.3 L287.0 374.0 L287.5 379.8 L288.0 382.4 L288.5 389.2 L289.0 386.3 L289.5 389.8 L290.0 389.6 L290.5 389.6 L291.0 399.4 L291.5 391.7 L292.0 379.8 L292.5 387.3 L293.0 390.5 L293.5 388.0 L294.0 378.0 L294.5 375.1 L295.0 374.8 L295.5 374.6 L296.0 382.1 L296.5 379.1 L297.0 373.0 L297.5 376.5 L298.0 373.8 L298.5 383.7 L299.0 381.2 L299.5 388.9 L300.0 389.8 L300.5 378.8 L301.0 380.1 L301.5 383.4 L302.0 375.6 L302.5 380.6 L303.0 388.2 L303.5 390.3 L304.0 371.9 L304.5 373.2 L305.0 374.6 L305.5 367.3 L306.0 370.9 L306.5 375.1 L307.0 370.8 L307.5 372.4 L308.0 384.9 L308.5 381.9 L309.0 391.5 L309.5 380.9 L310.0 382.2 L310.5 377.6 L311.0 388.3 L311.5 385.3 L312.0 391.1 L312.5 382.3 L313.0 378.4 L313.5 378.3 L314.0 381.0 L314.5 369.4 L315.0 370.4 L315.5 376.0 L316.0 379.6 L316.5 377.7 L317.0 384.7 L317.5 384.5 L318.0 386.4 L318.5 374.9 L319.0 380.9 L319.5 387.3 L320.0 374.7 L320.5 380.7 L321.0 377.8 L321.5 386.4 L322.0 376.2 L322.5 383.5 L323.0 380.1 L323.5 384.6 L324.0 375.2 L324.5 365.1 L325.0 364.2 L325.5 369.2 L326.0 374.4 L326.5 373.4 L327.0 373.2 L327.5 387.3 L328.0 376.3 L328.5 363.7 L329.0 375.5 L329.5 376.9 L330.0 370.2 L330.5 374.2 L331.0 377.4 L331.5 378.5 L332.0 369.7 L332.5 368.7 L333.0 378.1 L333.5 370.1 L334.0 370.2 L334.5 375.6 L335.0 375.4 L335.5 369.2 L336.0 377.2 L336.5 378.0 L337.0 383.1 L337.5 385.0 L338.0 372.4 L338.5 377.5 L339.0 381.8 L339.5 392.4 L340.0 388.6 L340.5 379.9 L341.0 390.4 L341.5 384.5 L342.0 387.8 L342.5 380.0 L343.0 372.8 L343.5 374.6 L344.0 377.7 L344.5 368.1 L345.0 368.6 L345.5 372.2 L346.0 379.3 L346.5 379.4 L347.0 372.1 L347.5 377.6 L348.0 375.6 L348.5 382.9 L349.0 379.1 L349.5 386.7 L350.0 383.8 L350.5 386.0 L351.0 384.2 L351.5 387.4 L352.0 367.6 L352.5 382.3 L353.0 377.8 L353.5 374.9 L354.0 374.5 L354.5 373.5 L355.0 385.4 L355.5 369.3 L356.0 380.8 L356.5 377.5 L357.0 389.7 L357.5 390.3 L358.0 369.5 L358.5 374.5 L359.0 370.9 L359.5 370.4 L360.0 389.3 L360.5 380.9 L361.0 385.4 L361.5 383.9 L362.0 382.2 L362.5 377.9 L363.0 377.1 L363.5 374.7 L364.0 371.7 L364.5 371.1 L365.0 363.9 L365.5 377.0 L366.0 376.0 L366.5 376.9 L367.0 381.6 L367.5 378.9 L368.0 378.4 L368.5 382.2 L369.0 386.9 L369.5 382.1 L370.0 384.4 L370.5 384.2 L371.0 393.7 L371.5 382.7 L372.0 378.0 L372.5 380.2 L373.0 373.6 L373.5 361.8 L374.0 365.5 L374.5 368.3 L375.0 367.8 L375.5 372.2 L376.0 380.6 L376.5 377.3 L377.0 375.8 L377.5 369.9 L378.0 376.2 L378.5 383.4 L379.0 381.8 L379.5 391.6 L380.0 380.3 L380.5 377.6 L381.0 372.1 L381.5 378.2 L382.0 371.6 L382.5 373.3 L383.0 361.1 L383.5 373.0 L384.0 371.9 L384.5 370.8 L385.0 372.3 L385.5 367.3 L386.0 366.3 L386.5 382.4 L387.0 374.0 L387.5 372.5 L388.0 377.1 L388.5 373.7 L389.0 373.3 L389.5 372.7 L390.0 382.3 L390.5 386.5 L391.0 381.0 L391.5 381.6 L392.0 373.2 L392.5 371.8 L393.0 359.2 L393.5 373.5 L394.0 374.3 L394.5 374.8 L395.0 366.2 L395.5 380.4 L396.0 378.8 L396.5 380.7 L397.0 392.8 L397.5 385.2 L398.0 378.4 L398.5 382.3 L399.0 376.2 L399.5 387.3 L400.0 382.8 L400.5 386.6 L401.0 377.4 L401.5 384.1 L402.0 376.8 L402.5 382.6 L403.0 378.3 L403.5 380.6 L404.0 371.8 L404.5 374.6 L405.0 381.0 L405.5 380.6 L406.0 377.8 L406.5 385.7 L407.0 381.1 L407.5 382.8 L408.0 388.2 L408.5 379.6 L409.0 383.5 L409.5 394.0 L410.0 385.7 L410.5 375.4 L411.0 393.7 L411.5 392.9 L412.0 386.8 L412.5 387.7 L413.0 384.3 L413.5 382.1 L414.0 384.0 L414.5 381.0 L415.0 382.3 L415.5 386.5 L416.0 380.4 L416.5 381.3 L417.0 388.1 L417.5 383.6 L418.0 389.6 L418.5 389.4 L419.0 393.6 L419.5 389.7 L420.0 391.3 L420.5 375.0 L421.0 385.1 L421.5 383.5 L422.0 375.4 L422.5 370.6 L423.0 365.0 L423.5 358.6 L424.0 366.2 L424.5 376.2 L425.0 382.5 L425.5 372.8 L426.0 385.6 L426.5 382.3 L427.0 376.9 L427.5 376.8 L428.0 379.8 L428.5 373.3 L429.0 376.1 L429.5 377.4 L430.0 389.2 L430.5 381.6 L431.0 377.4 L431.5 376.9 L432.0 363.7 L432.5 371.1 L433.0 359.5 L433.5 361.2 L434.0 368.6 L434.5 369.7 L435.0 372.3 L435.5 369.7 L436.0 375.1 L436.5 376.5 L437.0 387.4 L437.5 379.3 L438.0 374.8 L438.5 373.0 L439.0 379.3 L439.5 377.5 L440.0 377.0 L440.5 369.4 L441.0 368.3 L441.5 372.3 L442.0 380.9 L442.5 371.0 L443.0 380.4 L443.5 368.7 L444.0 374.9 L444.5 376.6 L445.0 380.3 L445.5 377.0 L446.0 385.6 L446.5 381.2 L447.0 384.7 L447.5 379.1 L448.0 383.9 L448.5 387.4 L449.0 384.7 L449.5 382.6 L450.0 382.6 L450.5 378.4 L451.0 374.2 L451.5 377.7 L452.0 381.3 L452.5 375.5 L453.0 376.5 L453.5 368.1 L454.0 372.7 L454.5 375.8 L455.0 374.8 L455.5 375.2 L456.0 380.9 L456.5 384.1 L457.0 378.6 L457.5 371.4 L458.0 375.7 L458.5 380.6 L459.0 383.3 L459.5 390.9 L460.0 386.0 L460.5 393.4 L461.0 384.0 L461.5 380.3 L462.0 382.4 L462.5 370.8 L463.0 376.8 L463.5 391.0 L464.0 387.6 L464.5 387.2 L465.0 385.4 L465.5 386.0 L466.0 390.2 L466.5 388.5 L467.0 380.8 L467.5 380.1 L468.0 379.0 L468.5 391.7 L469.0 383.6 L469.5 382.9 L470.0 379.2 L470.5 375.3 L471.0 378.0 L471.5 358.7 L472.0 360.7 L472.5 371.4 L473.0 376.8 L473.5 364.5 L474.0 382.5 L474.5 381.1 L475.0 371.8 L475.5 379.0 L476.0 373.4 L476.5 376.2 L477.0 381.1 L477.5 383.6 L478.0 389.6 L478.5 378.0 L479.0 376.7 L479.5 373.0 L480.0 373.6 L480.5 367.4 L481.0 384.3 L481.5 369.9 L482.0 370.3 L482.5 364.9 L483.0 371.6 L483.5 377.9 L484.0 382.2 L484.5 377.1 L485.0 382.8 L485.5 376.1 L486.0 366.1 L486.5 360.7 L487.0 371.9 L487.5 380.5 L488.0 374.3 L488.5 379.6 L489.0 376.0 L489.5 379.3 L490.0 381.8 L490.5 382.9 L491.0 372.4 L491.5 373.1 L492.0 370.8 L492.5 370.8 L493.0 371.0 L493.5 380.8 L494.0 380.0 L494.5 374.3 L495.0 377.1 L495.5 378.8 L496.0 381.6 L496.5 388.8 L497.0 382.7 L497.5 382.1 L498.0 380.5 L498.5 391.1 L499.0 379.2 L499.5 376.4 L500.0 381.2 L500.5 375.1 L501.0 374.2 L501.5 365.2 L502.0 378.9 L502.5 368.1 L503.0 371.0 L503.5 377.9 L504.0 371.6 L504.5 381.9 L505.0 383.9 L505.5 390.5 L506.0 384.0 L506.5 379.1 L507.0 381.1 L507.5 379.4 L508.0 385.6 L508.5 393.0 L509.0 381.8 L509.5 375.2 L510.0 374.5 L510.5 380.1 L511.0 369.2 L511.5 366.3 L512.0 368.9 L512.5 374.5 L513.0 377.9 L513.5 363.5 L514.0 384.4 L514.5 382.5 L515.0 386.0 L515.5 375.4 L516.0 383.8 L516.5 391.6 L517.0 392.3 L517.5 390.1 L518.0 392.0 L518.5 386.5 L519.0 373.0 L519.5 384.3 L520.0 379.0 L520.5 379.8 L521.0 371.6 L521.5 375.1 L522.0 389.2 L522.5 380.4 L523.0 373.8 L523.5 379.0 L524.0 378.7 L524.5 380.0 L525.0 390.2 L525.5 382.1 L526.0 384.0 L526.5 379.6 L527.0 379.3 L527.5 389.8 L528.0 389.5 L528.5 391.3 L529.0 378.5 L529.5 381.0 L530.0 380.2 L530.5 362.8 L531.0 366.6 L531.5 370.7 L532.0 370.6 L532.5 365.1 L533.0 379.8 L533.5 383.0 L534.0 380.9 L534.5 379.3 L535.0 377.3 L535.5 379.9 L536.0 379.2 L536.5 385.0 L537.0 378.2 L537.5 378.7 L538.0 373.7 L538.5 371.6 L539.0 372.7 L539.5 370.6 L540.0 370.4 L540.5 377.8 L541.0 370.5 L541.5 368.2 L542.0 363.4 L542.5 369.1 L543.0 383.9 L543.5 382.4 L544.0 380.2 L544.5 376.5 L545.0 383.1 L545.5 383.1 L546.0 377.6 L546.5 377.1 L547.0 390.6 L547.5 387.0 L548.0 392.2 L548.5 379.3 L549.0 374.8 L549.5 369.4 L550.0 359.5 L550.5 364.0 L551.0 365.5 L551.5 365.5 L552.0 373.3 L552.5 371.3 L553.0 376.4 L553.5 377.8 L554.0 362.9 L554.5 372.3 L555.0 374.0 L555.5 379.7 L556.0 383.6 L556.5 395.0 L557.0 384.0 L557.5 383.8 L558.0 382.7 L558.5 386.6 L559.0 381.4 L559.5 381.4 L560.0 382.1 L560.5 377.3 L561.0 387.7 L561.5 383.8 L562.0 379.1 L562.5 375.8 L563.0 382.3 L563.5 374.7 L564.0 378.6 L564.5 385.0 L565.0 389.6 L565.5 385.9 L566.0 399.5 L566.5 396.1 L567.0 390.2 L567.5 392.8 L568.0 391.3 L568.5 387.9 L569.0 390.4 L569.5 385.0 L570.0 372.4 L570.5 383.5 L571.0 373.3 L571.5 382.1 L572.0 379.0 L572.5 375.3 L573.0 377.5 L573.5 387.2 L574.0 386.8 L574.5 376.0 L575.0 390.2 L575.5 381.0 L576.0 386.8 L576.5 388.0 L577.0 383.4 L577.5 379.6 L578.0 382.6 L578.5 373.8 L579.0 373.7 L579.5 377.8 L580.0 379.4 L580.5 376.6 L581.0 372.8 L581.5 385.5 L582.0 371.9 L582.5 379.1 L583.0 379.7 L583.5 392.0 L584.0 377.4 L584.5 389.5 L585.0 394.9 L585.5 392.3 L586.0 389.4 L586.5 376.4 L587.0 378.4 L587.5 379.1 L588.0 376.4 L588.5 377.4 L589.0 375.9 L589.5 374.6 L590.0 361.6 L590.5 364.3 L591.0 352.9 L591.5 366.8 L592.0 368.3 L592.5 375.7 L593.0 370.8 L593.5 376.0 L594.0 382.8 L594.5 387.2 L595.0 380.6 L595.5 381.5 L596.0 385.9 L596.5 384.1 L597.0 383.4 L597.5 385.1 L598.0 389.8 L598.5 386.4 L599.0 375.3 L599.5 366.6 L600.0 366.6 L600.5 371.2 L601.0 370.4 L601.5 372.5 L602.0 372.4 L602.5 378.5 L603.0 380.1 L603.5 380.2 L604.0 380.8 L604.5 383.1 L605.0 377.2 L605.5 374.1 L606.0 380.1 L606.5 383.7 L607.0 377.0 L607.5 386.1 L608.0 379.1 L608.5 363.6 L609.0 371.0 L609.5 384.2 L610.0 387.2 L610.5 380.7 L611.0 379.0 L611.5 376.6 L612.0 390.4 L612.5 377.0 L613.0 383.2 L613.5 382.7 L614.0 383.1 L614.5 377.2 L615.0 386.1 L615.5 387.2 L616.0 380.6 L616.5 388.7 L617.0 378.9 L617.5 374.5 L618.0 376.0 L618.5 371.7 L619.0 369.3 L619.5 378.8 L620.0 374.4 L620.5 372.8 L621.0 387.9 L621.5 377.2 L622.0 387.9 L622.5 384.8 L623.0 378.6 L623.5 384.8 L624.0 387.4 L624.5 383.2 L625.0 383.7 L625.5 377.2 L626.0 380.3 L626.5 394.8 L627.0 381.9 L627.5 377.6 L628.0 379.2 L628.5 374.5 L629.0 381.4 L629.5 374.7 L630.0 372.3 L630.5 377.1 L631.0 372.3 L631.5 378.3 L632.0 372.2 L632.5 371.7 L633.0 370.8 L633.5 375.5 L634.0 375.2 L634.5 383.7 L635.0 380.3 L635.5 380.9 L636.0 381.5 L636.5 381.0 L637.0 383.5 L637.5 377.3 L638.0 366.0 L638.5 363.3 L639.0 372.2 L639.5 371.3 L640.0 369.2 L640.5 378.7 L641.0 378.8 L641.5 373.8 L642.0 373.3 L642.5 384.6 L643.0 375.0 L643.5 376.1 L644.0 373.1 L644.5 371.5 L645.0 382.1 L645.5 397.2 L646.0 384.5 L646.5 377.5 L647.0 386.6 L647.5 380.1 L648.0 370.5 L648.5 359.8 L649.0 359.3 L649.5 361.2 L650.0 371.4 L650.5 378.1 L651.0 386.2 L651.5 376.2 L652.0 386.1 L652.5 382.5 L653.0 381.4 L653.5 377.4 L654.0 380.1 L654.5 380.1 L655.0 380.1 L655.5 393.8 L656.0 382.4 L656.5 371.9 L657.0 375.8 L657.5 370.6 L658.0 367.6 L658.5 365.2 L659.0 369.6 L659.5 381.7 L660.0 374.8 L660.5 374.2 L661.0 373.6 L661.5 388.2 L662.0 380.0 L662.5 376.7 L663.0 380.9 L663.5 388.1 L664.0 384.1 L664.5 377.5 L665.0 384.2 L665.5 374.0 L666.0 387.5 L666.5 383.3 L667.0 380.3 L667.5 376.9 L668.0 384.1 L668.5 380.6 L669.0 367.9 L669.5 380.3 L670.0 374.0 L670.5 385.6 L671.0 379.6 L671.5 387.1 L672.0 388.1 L672.5 388.9 L673.0 382.8 L673.5 387.7 L674.0 376.1" stroke="#62f562" stroke-width="1.5" fill="none" stroke-linejoin="round"/><path d="M84.5 401.8 L85.0 398.1 L85.5 397.5 L86.0 394.8 L86.5 393.5 L87.0 395.4 L87.5 397.7 L88.0 402.2 L88.5 406.3 L89.0 410.0 L89.5 413.8 L90.0 415.4 L90.5 419.6 L91.0 419.3 L91.5 419.4 L92.0 419.7 L92.5 416.3 L93.0 412.2 L93.5 411.0 L94.0 406.8 L94.5 400.7 L95.0 396.3 L95.5 395.5 L96.0 395.5 L96.5 396.6 L97.0 397.5 L97.5 399.2 L98.0 401.0 L98.5 404.4 L99.0 406.7 L99.5 410.4 L100.0 412.8 L100.5 414.3 L101.0 414.8 L101.5 414.3 L102.0 412.7 L102.5 408.2 L103.0 403.4 L103.5 400.7 L104.0 398.1 L104.5 394.6 L105.0 391.0 L105.5 388.7 L106.0 386.6 L106.5 388.1 L107.0 390.6 L107.5 393.3 L108.0 397.8 L108.5 403.4 L109.0 406.2 L109.5 409.3 L110.0 410.0 L110.5 413.0 L111.0 413.0 L111.5 410.4 L112.0 407.5 L112.5 406.4 L113.0 400.1 L113.5 394.5 L114.0 388.9 L114.5 387.4 L115.0 385.0 L115.5 384.1 L116.0 385.1 L116.5 386.4 L117.0 389.9 L117.5 392.7 L118.0 395.4 L118.5 400.3 L119.0 402.2 L119.5 405.0 L120.0 408.5 L120.5 408.8 L121.0 407.6 L121.5 407.6 L122.0 404.3 L122.5 400.3 L123.0 396.9 L123.5 393.3 L124.0 390.2 L124.5 385.8 L125.0 385.0 L125.5 384.7 L126.0 387.1 L126.5 387.6 L127.0 391.4 L127.5 395.4 L128.0 401.7 L128.5 405.4 L129.0 406.6 L129.5 408.6 L130.0 409.9 L130.5 413.3 L131.0 411.2 L131.5 409.6 L132.0 404.1 L132.5 403.0 L133.0 399.1 L133.5 395.6 L134.0 392.1 L134.5 390.4 L135.0 389.9 L135.5 388.6 L136.0 392.6 L136.5 395.4 L137.0 398.1 L137.5 402.0 L138.0 407.0 L138.5 411.0 L139.0 414.1 L139.5 418.1 L140.0 420.7 L140.5 419.9 L141.0 417.2 L141.5 417.1 L142.0 413.9 L142.5 411.8 L143.0 407.7 L143.5 403.1 L144.0 400.8 L144.5 398.3 L145.0 396.5 L145.5 397.6 L146.0 397.4 L146.5 398.1 L147.0 401.6 L147.5 407.5 L148.0 410.8 L148.5 412.1 L149.0 416.1 L149.5 417.6 L150.0 418.5 L150.5 418.7 L151.0 415.9 L151.5 412.0 L152.0 410.8 L152.5 407.5 L153.0 402.8 L153.5 397.9 L154.0 392.5 L154.5 393.6 L155.0 392.6 L155.5 390.5 L156.0 391.8 L156.5 393.6 L157.0 395.3 L157.5 399.8 L158.0 403.4 L158.5 407.3 L159.0 411.4 L159.5 412.2 L160.0 412.9 L160.5 411.7 L161.0 408.9 L161.5 404.3 L162.0 400.9 L162.5 395.2 L163.0 391.3 L163.5 389.1 L164.0 388.6 L164.5 384.9 L165.0 383.5 L165.5 382.6 L166.0 386.6 L166.5 389.4 L167.0 392.3 L167.5 395.2 L168.0 400.2 L168.5 402.2 L169.0 406.1 L169.5 407.6 L170.0 408.8 L170.5 407.5 L171.0 407.6 L171.5 403.0 L172.0 399.5 L172.5 397.4 L173.0 392.4 L173.5 390.1 L174.0 388.2 L174.5 384.7 L175.0 385.1 L175.5 387.6 L176.0 390.1 L176.5 392.6 L177.0 397.8 L177.5 398.4 L178.0 403.5 L178.5 408.8 L179.0 413.5 L179.5 413.3 L180.0 413.5 L180.5 413.2 L181.0 410.2 L181.5 405.6 L182.0 399.2 L182.5 396.3 L183.0 396.7 L183.5 392.7 L184.0 390.5 L184.5 388.2 L185.0 394.0 L185.5 393.3 L186.0 395.8 L186.5 398.0 L187.0 402.1 L187.5 403.7 L188.0 408.8 L188.5 414.4 L189.0 415.2 L189.5 416.2 L190.0 415.6 L190.5 415.8 L191.0 412.0 L191.5 406.1 L192.0 402.3 L192.5 400.2 L193.0 396.1 L193.5 396.9 L194.0 394.3 L194.5 392.9 L195.0 393.1 L195.5 395.4 L196.0 400.5 L196.5 405.0 L197.0 406.6 L197.5 410.0 L198.0 413.1 L198.5 416.3 L199.0 420.3 L199.5 419.1 L200.0 419.0 L200.5 415.2 L201.0 414.6 L201.5 408.2 L202.0 405.0 L202.5 400.3 L203.0 395.3 L203.5 393.1 L204.0 393.0 L204.5 396.7 L205.0 396.1 L205.5 398.0 L206.0 400.1 L206.5 405.1 L207.0 409.1 L207.5 414.7 L208.0 416.5 L208.5 416.5 L209.0 415.0 L209.5 415.0 L210.0 414.4 L210.5 409.3 L211.0 406.4 L211.5 403.4 L212.0 397.5 L212.5 393.4 L213.0 389.5 L213.5 387.0 L214.0 386.4 L214.5 387.1 L215.0 387.8 L215.5 391.7 L216.0 394.4 L216.5 398.1 L217.0 400.3 L217.5 402.3 L218.0 404.8 L218.5 407.3 L219.0 409.2 L219.5 406.9 L220.0 406.1 L220.5 400.9 L221.0 396.5 L221.5 392.8 L222.0 389.9 L222.5 384.7 L223.0 382.8 L223.5 381.3 L224.0 382.5 L224.5 382.0 L225.0 383.7 L225.5 387.2 L226.0 391.2 L226.5 396.8 L227.0 400.0 L227.5 403.0 L228.0 405.7 L228.5 406.4 L229.0 407.4 L229.5 404.8 L230.0 407.5 L230.5 404.5 L231.0 400.3 L231.5 394.5 L232.0 391.6 L232.5 387.2 L233.0 387.4 L233.5 387.5 L234.0 388.0 L234.5 389.0 L235.0 394.4 L235.5 397.6 L236.0 401.8 L236.5 405.8 L237.0 406.8 L237.5 409.7 L238.0 413.4 L238.5 416.7 L239.0 416.8 L239.5 413.6 L240.0 413.1 L240.5 410.0 L241.0 407.3 L241.5 403.7 L242.0 400.1 L242.5 396.6 L243.0 393.3 L243.5 391.8 L244.0 391.4 L244.5 394.4 L245.0 399.7 L245.5 402.7 L246.0 406.9 L246.5 409.5 L247.0 410.6 L247.5 415.1 L248.0 416.7 L248.5 418.9 L249.0 416.4 L249.5 417.0 L250.0 412.6 L250.5 410.7 L251.0 406.0 L251.5 401.4 L252.0 397.4 L252.5 394.7 L253.0 395.5 L253.5 392.3 L254.0 394.8 L254.5 398.5 L255.0 399.8 L255.5 400.2 L256.0 405.6 L256.5 408.1 L257.0 412.9 L257.5 414.7 L258.0 417.9 L258.5 418.2 L259.0 413.8 L259.5 412.0 L260.0 406.8 L260.5 403.6 L261.0 401.8 L261.5 397.9 L262.0 392.3 L262.5 390.8 L263.0 391.2 L263.5 389.8 L264.0 392.7 L264.5 395.4 L265.0 396.8 L265.5 398.9 L266.0 402.7 L266.5 407.6 L267.0 410.3 L267.5 412.0 L268.0 411.7 L268.5 413.0 L269.0 411.2 L269.5 407.9 L270.0 407.7 L270.5 401.8 L271.0 395.6 L271.5 392.9 L272.0 388.7 L272.5 386.8 L273.0 384.9 L273.5 387.4 L274.0 387.6 L274.5 388.7 L275.0 391.7 L275.5 396.1 L276.0 398.8 L276.5 405.1 L277.0 406.1 L277.5 409.4 L278.0 408.0 L278.5 407.8 L279.0 406.4 L279.5 401.4 L280.0 398.0 L280.5 393.5 L281.0 390.0 L281.5 388.1 L282.0 384.9 L282.5 385.8 L283.0 383.1 L283.5 383.3 L284.0 385.0 L284.5 389.1 L285.0 392.1 L285.5 399.8 L286.0 403.8 L286.5 404.4 L287.0 409.6 L287.5 412.2 L288.0 409.9 L288.5 408.4 L289.0 408.0 L289.5 404.8 L290.0 404.4 L290.5 401.6 L291.0 396.7 L291.5 393.6 L292.0 391.9 L292.5 391.4 L293.0 391.5 L293.5 393.0 L294.0 393.7 L294.5 398.8 L295.0 402.6 L295.5 407.0 L296.0 410.3 L296.5 413.3 L297.0 417.1 L297.5 419.7 L298.0 417.6 L298.5 418.0 L299.0 412.4 L299.5 412.5 L300.0 408.6 L300.5 403.3 L301.0 401.6 L301.5 397.6 L302.0 396.4 L302.5 395.0 L303.0 395.4 L303.5 395.6 L304.0 398.8 L304.5 403.9 L305.0 408.0 L305.5 412.2 L306.0 414.8 L306.5 418.5 L307.0 420.7 L307.5 421.2 L308.0 421.5 L308.5 418.4 L309.0 414.5 L309.5 410.9 L310.0 405.1 L310.5 400.2 L311.0 396.6 L311.5 393.9 L312.0 391.6 L312.5 392.0 L313.0 392.2 L313.5 393.7 L314.0 398.6 L314.5 400.5 L315.0 403.3 L315.5 407.0 L316.0 408.1 L316.5 411.2 L317.0 411.1 L317.5 408.8 L318.0 408.7 L318.5 407.1 L319.0 402.9 L319.5 400.5 L320.0 395.7 L320.5 392.1 L321.0 388.8 L321.5 387.6 L322.0 386.7 L322.5 387.3 L323.0 388.2 L323.5 389.0 L324.0 391.6 L324.5 396.3 L325.0 401.7 L325.5 403.0 L326.0 404.7 L326.5 407.5 L327.0 408.6 L327.5 409.8 L328.0 407.7 L328.5 406.4 L329.0 402.1 L329.5 397.5 L330.0 393.9 L330.5 390.8 L331.0 387.9 L331.5 384.2 L332.0 383.9 L332.5 387.0 L333.0 389.9 L333.5 392.2 L334.0 395.2 L334.5 400.6 L335.0 401.5 L335.5 406.5 L336.0 407.8 L336.5 410.6 L337.0 409.8 L337.5 409.3 L338.0 408.9 L338.5 405.7 L339.0 404.8 L339.5 402.2 L340.0 397.6 L340.5 394.1 L341.0 392.3 L341.5 389.6 L342.0 388.0 L342.5 389.4 L343.0 393.9 L343.5 393.4 L344.0 400.3 L344.5 402.6 L345.0 404.4 L345.5 407.1 L346.0 410.8 L346.5 415.3 L347.0 413.7 L347.5 411.5 L348.0 411.4 L348.5 409.0 L349.0 403.6 L349.5 401.3 L350.0 397.7 L350.5 394.7 L351.0 393.8 L351.5 391.5 L352.0 391.6 L352.5 393.6 L353.0 398.0 L353.5 403.3 L354.0 405.5 L354.5 408.6 L355.0 413.3 L355.5 417.0 L356.0 419.2 L356.5 419.9 L357.0 421.7 L357.5 418.0 L358.0 416.1 L358.5 412.1 L359.0 409.8 L359.5 404.5 L360.0 403.8 L360.5 397.8 L361.0 396.9 L361.5 396.3 L362.0 395.5 L362.5 396.3 L363.0 399.5 L363.5 402.5 L364.0 403.4 L364.5 409.0 L365.0 411.0 L365.5 415.5 L366.0 418.2 L366.5 417.0 L367.0 417.5 L367.5 415.2 L368.0 410.3 L368.5 405.8 L369.0 399.4 L369.5 396.6 L370.0 394.3 L370.5 390.3 L371.0 385.8 L371.5 387.0 L372.0 388.4 L372.5 386.9 L373.0 392.2 L373.5 395.7 L374.0 398.1 L374.5 400.5 L375.0 402.5 L375.5 405.5 L376.0 408.4 L376.5 406.5 L377.0 407.5 L377.5 403.8 L378.0 401.1 L378.5 395.0 L379.0 392.0 L379.5 388.3 L380.0 383.3 L380.5 381.3 L381.0 381.3 L381.5 382.1 L382.0 386.0 L382.5 388.6 L383.0 389.9 L383.5 393.6 L384.0 397.7 L384.5 400.6 L385.0 401.8 L385.5 404.3 L386.0 406.5 L386.5 407.4 L387.0 407.9 L387.5 404.0 L388.0 400.6 L388.5 396.3 L389.0 392.4 L389.5 388.3 L390.0 386.6 L390.5 386.6 L391.0 387.9 L391.5 387.3 L392.0 392.5 L392.5 394.8 L393.0 398.7 L393.5 401.3 L394.0 405.6 L394.5 409.3 L395.0 412.7 L395.5 416.1 L396.0 416.2 L396.5 413.3 L397.0 413.0 L397.5 408.9 L398.0 406.6 L398.5 403.7 L399.0 400.4 L399.5 396.7 L400.0 393.9 L400.5 392.3 L401.0 391.7 L401.5 394.4 L402.0 394.5 L402.5 398.9 L403.0 401.9 L403.5 406.4 L404.0 410.2 L404.5 412.0 L405.0 411.6 L405.5 415.9 L406.0 417.6 L406.5 415.5 L407.0 413.0 L407.5 411.1 L408.0 405.8 L408.5 404.5 L409.0 402.2 L409.5 397.5 L410.0 395.1 L410.5 393.5 L411.0 393.4 L411.5 393.5 L412.0 397.2 L412.5 399.7 L413.0 402.6 L413.5 405.0 L414.0 409.8 L414.5 412.6 L415.0 415.5 L415.5 414.3 L416.0 415.3 L416.5 414.2 L417.0 412.4 L417.5 410.3 L418.0 405.7 L418.5 400.5 L419.0 394.5 L419.5 393.0 L420.0 390.7 L420.5 392.9 L421.0 391.9 L421.5 392.1 L422.0 394.3 L422.5 399.7 L423.0 404.2 L423.5 407.2 L424.0 409.1 L424.5 411.7 L425.0 414.4 L425.5 414.1 L426.0 411.5 L426.5 409.9 L427.0 408.2 L427.5 402.4 L428.0 396.8 L428.5 393.9 L429.0 390.3 L429.5 387.6 L430.0 386.6 L430.5 386.5 L431.0 388.1 L431.5 388.6 L432.0 389.7 L432.5 392.7 L433.0 396.3 L433.5 401.0 L434.0 403.9 L434.5 407.1 L435.0 408.9 L435.5 408.5 L436.0 405.4 L436.5 402.3 L437.0 399.5 L437.5 395.2 L438.0 392.2 L438.5 387.8 L439.0 385.2 L439.5 384.6 L440.0 382.3 L440.5 382.5 L441.0 382.8 L441.5 384.0 L442.0 388.3 L442.5 392.6 L443.0 395.6 L443.5 401.6 L444.0 405.2 L444.5 405.3 L445.0 407.3 L445.5 406.0 L446.0 406.8 L446.5 406.7 L447.0 404.0 L447.5 400.0 L448.0 395.0 L448.5 393.3 L449.0 390.8 L449.5 389.2 L450.0 388.2 L450.5 392.7 L451.0 393.4 L451.5 398.2 L452.0 400.3 L452.5 402.2 L453.0 408.2 L453.5 413.4 L454.0 416.0 L454.5 416.8 L455.0 417.8 L455.5 415.4 L456.0 416.0 L456.5 414.6 L457.0 412.7 L457.5 407.2 L458.0 403.1 L458.5 400.8 L459.0 398.5 L459.5 395.4 L460.0 395.1 L460.5 395.2 L461.0 400.5 L461.5 402.6 L462.0 405.2 L462.5 407.5 L463.0 414.1 L463.5 417.4 L464.0 418.9 L464.5 418.4 L465.0 417.7 L465.5 417.5 L466.0 414.9 L466.5 410.4 L467.0 405.5 L467.5 403.6 L468.0 397.7 L468.5 394.4 L469.0 391.8 L469.5 390.7 L470.0 389.2 L470.5 390.7 L471.0 393.2 L471.5 396.7 L472.0 399.6 L472.5 404.1 L473.0 407.3 L473.5 410.1 L474.0 414.1 L474.5 412.8 L475.0 411.7 L475.5 409.3 L476.0 409.3 L476.5 407.1 L477.0 400.8 L477.5 395.2 L478.0 390.2 L478.5 387.9 L479.0 388.5 L479.5 387.7 L480.0 386.8 L480.5 387.7 L481.0 389.8 L481.5 393.7 L482.0 398.1 L482.5 403.8 L483.0 404.6 L483.5 407.1 L484.0 411.2 L484.5 409.9 L485.0 409.6 L485.5 406.8 L486.0 404.6 L486.5 401.3 L487.0 397.5 L487.5 394.0 L488.0 390.7 L488.5 386.6 L489.0 385.4 L489.5 385.2 L490.0 385.2 L490.5 388.3 L491.0 391.0 L491.5 395.2 L492.0 398.5 L492.5 401.1 L493.0 403.5 L493.5 407.2 L494.0 408.7 L494.5 410.4 L495.0 409.4 L495.5 407.2 L496.0 403.1 L496.5 400.3 L497.0 396.5 L497.5 392.4 L498.0 388.3 L498.5 385.6 L499.0 386.7 L499.5 387.5 L500.0 387.0 L500.5 390.9 L501.0 397.5 L501.5 399.6 L502.0 403.8 L502.5 407.9 L503.0 409.1 L503.5 411.9 L504.0 411.6 L504.5 412.5 L505.0 410.9 L505.5 409.5 L506.0 406.4 L506.5 401.8 L507.0 399.2 L507.5 398.0 L508.0 394.7 L508.5 391.4 L509.0 391.3 L509.5 393.9 L510.0 394.8 L510.5 398.9 L511.0 402.5 L511.5 406.5 L512.0 410.5 L512.5 413.3 L513.0 415.1 L513.5 419.0 L514.0 420.4 L514.5 421.2 L515.0 417.5 L515.5 416.7 L516.0 410.1 L516.5 406.8 L517.0 403.7 L517.5 399.4 L518.0 397.2 L518.5 394.9 L519.0 395.2 L519.5 396.0 L520.0 398.0 L520.5 399.5 L521.0 404.5 L521.5 408.7 L522.0 413.9 L522.5 417.1 L523.0 417.4 L523.5 417.0 L524.0 416.0 L524.5 413.7 L525.0 413.4 L525.5 407.5 L526.0 404.5 L526.5 401.2 L527.0 395.4 L527.5 394.7 L528.0 389.5 L528.5 387.5 L529.0 387.6 L529.5 390.0 L530.0 392.5 L530.5 394.7 L531.0 398.0 L531.5 402.5 L532.0 404.5 L532.5 405.8 L533.0 408.4 L533.5 410.3 L534.0 409.9 L534.5 409.3 L535.0 408.4 L535.5 400.8 L536.0 396.2 L536.5 393.9 L537.0 389.4 L537.5 385.9 L538.0 383.4 L538.5 380.3 L539.0 381.7 L539.5 385.0 L540.0 389.1 L540.5 392.4 L541.0 397.5 L541.5 401.0 L542.0 403.3 L542.5 406.4 L543.0 406.6 L543.5 408.5 L544.0 406.5 L544.5 403.4 L545.0 398.2 L545.5 397.8 L546.0 396.1 L546.5 393.8 L547.0 390.3 L547.5 389.6 L548.0 389.0 L548.5 388.9 L549.0 389.9 L549.5 391.7 L550.0 392.4 L550.5 397.6 L551.0 401.6 L551.5 405.2 L552.0 411.6 L552.5 412.9 L553.0 414.1 L553.5 412.6 L554.0 411.5 L554.5 410.3 L555.0 406.3 L555.5 404.0 L556.0 400.2 L556.5 396.7 L557.0 390.6 L557.5 391.3 L558.0 390.3 L558.5 391.2 L559.0 392.8 L559.5 396.9 L560.0 403.0 L560.5 406.2 L561.0 406.9 L561.5 409.7 L562.0 413.1 L562.5 415.8 L563.0 415.9 L563.5 414.2 L564.0 413.8 L564.5 410.0 L565.0 404.6 L565.5 405.4 L566.0 403.7 L566.5 400.6 L567.0 397.9 L567.5 396.2 L568.0 395.6 L568.5 395.9 L569.0 396.5 L569.5 399.0 L570.0 403.2 L570.5 407.1 L571.0 408.5 L571.5 414.5 L572.0 416.9 L572.5 420.1 L573.0 418.4 L573.5 415.6 L574.0 414.1 L574.5 411.7 L575.0 407.9 L575.5 402.7 L576.0 399.9 L576.5 396.0 L577.0 392.6 L577.5 390.4 L578.0 390.8 L578.5 391.9 L579.0 393.6 L579.5 398.5 L580.0 401.6 L580.5 404.2 L581.0 409.4 L581.5 413.4 L582.0 414.9 L582.5 416.1 L583.0 416.1 L583.5 413.4 L584.0 409.9 L584.5 405.6 L585.0 401.3 L585.5 397.3 L586.0 395.3 L586.5 390.6 L587.0 390.1 L587.5 387.1 L588.0 386.3 L588.5 387.6 L589.0 391.0 L589.5 394.5 L590.0 396.9 L590.5 399.0 L591.0 402.3 L591.5 403.9 L592.0 407.4 L592.5 407.4 L593.0 408.3 L593.5 404.7 L594.0 402.2 L594.5 398.4 L595.0 395.3 L595.5 391.2 L596.0 387.7 L596.5 383.9 L597.0 380.7 L597.5 382.1 L598.0 382.3 L598.5 384.1 L599.0 388.1 L599.5 389.5 L600.0 396.3 L600.5 401.3 L601.0 405.0 L601.5 406.8 L602.0 411.7 L602.5 411.7 L603.0 410.7 L603.5 408.6 L604.0 404.5 L604.5 400.1 L605.0 398.1 L605.5 393.1 L606.0 391.1 L606.5 390.5 L607.0 388.8 L607.5 388.7 L608.0 391.5 L608.5 394.2 L609.0 396.6 L609.5 401.1 L610.0 405.5 L610.5 409.9 L611.0 410.8 L611.5 411.9 L612.0 417.3 L612.5 418.2 L613.0 415.6 L613.5 414.7 L614.0 411.1 L614.5 406.8 L615.0 404.4 L615.5 400.9 L616.0 396.7 L616.5 394.0 L617.0 391.4 L617.5 395.7 L618.0 396.5 L618.5 398.2 L619.0 401.1 L619.5 405.9 L620.0 408.6 L620.5 412.0 L621.0 415.4 L621.5 417.9 L622.0 419.2 L622.5 418.8 L623.0 416.0 L623.5 410.4 L624.0 408.4 L624.5 406.7 L625.0 400.2 L625.5 396.6 L626.0 395.2 L626.5 392.3 L627.0 392.3 L627.5 392.2 L628.0 394.6 L628.5 396.4 L629.0 396.9 L629.5 403.5 L630.0 409.9 L630.5 412.3 L631.0 415.5 L631.5 416.6 L632.0 415.8 L632.5 412.1 L633.0 411.5 L633.5 409.6 L634.0 406.8 L634.5 398.3 L635.0 395.4 L635.5 393.3 L636.0 389.7 L636.5 387.0 L637.0 389.5 L637.5 392.2 L638.0 393.8 L638.5 394.7 L639.0 396.7 L639.5 401.2 L640.0 404.9 L640.5 407.2 L641.0 409.0 L641.5 411.9 L642.0 410.7 L642.5 408.6 L643.0 405.1 L643.5 403.2 L644.0 399.7 L644.5 396.6 L645.0 391.4 L645.5 388.6 L646.0 387.0 L646.5 385.7 L647.0 385.0 L647.5 386.2 L648.0 390.1 L648.5 394.1 L649.0 396.1 L649.5 400.2 L650.0 404.3 L650.5 409.0 L651.0 406.7 L651.5 409.5 L652.0 407.7 L652.5 408.1 L653.0 403.8 L653.5 400.6 L654.0 396.7 L654.5 394.6 L655.0 391.3 L655.5 386.1 L656.0 386.7 L656.5 386.1 L657.0 385.8 L657.5 390.0 L658.0 391.0 L658.5 393.1 L659.0 397.8 L659.5 400.4 L660.0 404.4 L660.5 407.5 L661.0 409.8 L661.5 409.2 L662.0 407.6 L662.5 409.5 L663.0 406.5 L663.5 403.5 L664.0 401.5 L664.5 398.7 L665.0 396.2 L665.5 393.1 L666.0 389.9 L666.5 391.0 L667.0 395.3 L667.5 398.0 L668.0 403.5 L668.5 408.0 L669.0 411.2 L669.5 412.5 L670.0 413.6 L670.5 417.5 L671.0 418.4 L671.5 418.4 L672.0 419.3 L672.5 417.2 L673.0 416.0 L673.5 412.8 L674.0 409.0" stroke="#f416f4" stroke-width="1.65" fill="none" stroke-linejoin="round"/><path d="M84.5 170.0 V588.1" stroke="#4fd84f" stroke-width="1"/><path d="M674.3 170.0 V588.1" stroke="#d614d6" stroke-width="1.5"/><path d="M674.3 170.0 V588.1" stroke="#ff30ff" stroke-width="1.5" stroke-dasharray="2 2" opacity="0.3"/><path d="M82.0 170.5 H84.5" stroke="#4fd84f" stroke-width="1"/><path d="M83.0 191.4 H84.5" stroke="#4fd84f" stroke-width="1"/><path d="M82.0 212.3 H84.5" stroke="#4fd84f" stroke-width="1"/><path d="M83.0 233.1 H84.5" stroke="#4fd84f" stroke-width="1"/><path d="M82.0 254.0 H84.5" stroke="#4fd84f" stroke-width="1"/><path d="M83.0 274.9 H84.5" stroke="#4fd84f" stroke-width="1"/><path d="M82.0 295.8 H84.5" stroke="#4fd84f" stroke-width="1"/><path d="M83.0 316.7 H84.5" stroke="#4fd84f" stroke-width="1"/><path d="M82.0 337.5 H84.5" stroke="#4fd84f" stroke-width="1"/><path d="M83.0 358.4 H84.5" stroke="#4fd84f" stroke-width="1"/><path d="M82.0 379.3 H84.5" stroke="#4fd84f" stroke-width="1"/><path d="M83.0 400.2 H84.5" stroke="#4fd84f" stroke-width="1"/><path d="M82.0 421.1 H84.5" stroke="#4fd84f" stroke-width="1"/><path d="M83.0 441.9 H84.5" stroke="#4fd84f" stroke-width="1"/><path d="M82.0 462.8 H84.5" stroke="#4fd84f" stroke-width="1"/><path d="M83.0 483.7 H84.5" stroke="#4fd84f" stroke-width="1"/><path d="M82.0 504.6 H84.5" stroke="#4fd84f" stroke-width="1"/><path d="M83.0 525.5 H84.5" stroke="#4fd84f" stroke-width="1"/><path d="M82.0 546.3 H84.5" stroke="#4fd84f" stroke-width="1"/><path d="M83.0 567.2 H84.5" stroke="#4fd84f" stroke-width="1"/><path d="M82.0 588.1 H84.5" stroke="#4fd84f" stroke-width="1"/><path d="M84.5 588.1 H674.8" stroke="#e6e6e6" stroke-width="1.8"/><path d="M84.5 584.1 V592.1" stroke="#e6e6e6" stroke-width="1.2"/><path d="M114.0 585.9 V590.3" stroke="#e6e6e6" stroke-width="1.2"/><path d="M143.5 584.1 V592.1" stroke="#e6e6e6" stroke-width="1.2"/><path d="M173.0 585.9 V590.3" stroke="#e6e6e6" stroke-width="1.2"/><path d="M202.5 584.1 V592.1" stroke="#e6e6e6" stroke-width="1.2"/><path d="M231.9 585.9 V590.3" stroke="#e6e6e6" stroke-width="1.2"/><path d="M261.4 584.1 V592.1" stroke="#e6e6e6" stroke-width="1.2"/><path d="M290.9 585.9 V590.3" stroke="#e6e6e6" stroke-width="1.2"/><path d="M320.4 584.1 V592.1" stroke="#e6e6e6" stroke-width="1.2"/><path d="M349.9 585.9 V590.3" stroke="#e6e6e6" stroke-width="1.2"/><path d="M379.4 584.1 V592.1" stroke="#e6e6e6" stroke-width="1.2"/><path d="M408.9 585.9 V590.3" stroke="#e6e6e6" stroke-width="1.2"/><path d="M438.4 584.1 V592.1" stroke="#e6e6e6" stroke-width="1.2"/><path d="M467.9 585.9 V590.3" stroke="#e6e6e6" stroke-width="1.2"/><path d="M497.4 584.1 V592.1" stroke="#e6e6e6" stroke-width="1.2"/><path d="M526.8 585.9 V590.3" stroke="#e6e6e6" stroke-width="1.2"/><path d="M556.3 584.1 V592.1" stroke="#e6e6e6" stroke-width="1.2"/><path d="M585.8 585.9 V590.3" stroke="#e6e6e6" stroke-width="1.2"/><path d="M615.3 584.1 V592.1" stroke="#e6e6e6" stroke-width="1.2"/><path d="M644.8 585.9 V590.3" stroke="#e6e6e6" stroke-width="1.2"/><path d="M674.3 588.1 V592.1" stroke="#e6e6e6" stroke-width="1.2"/><path d="M697.5 458.5 L697.5 467 L689 462.8 Z" fill="#fa12fa"/></svg>
<span id="t15" class="t" style="left:84px;transform-origin:0 50%;top:154.5px;font-size:8.5px;color:#52ee52;font-weight:normal;transform:scaleX(0.8599);">フィードバック速度[min-1]</span>
<span id="t16" class="t" style="right:566px;transform-origin:100% 50%;top:154.5px;font-size:8.5px;color:#f51cf5;font-weight:normal;transform:scaleX(0.9078);">トルク指令[%]</span>
<span id="t17" class="t" style="right:1159.5px;transform-origin:100% 50%;top:164.0px;font-size:9.14px;color:#52ee52;font-weight:normal;transform:scaleX(0.9006);">10.5</span>
<span id="t18" class="t" style="right:1159.5px;transform-origin:100% 50%;top:205.76px;font-size:9.14px;color:#52ee52;font-weight:normal;transform:scaleX(0.9006);">10.4</span>
<span id="t19" class="t" style="right:1159.5px;transform-origin:100% 50%;top:247.52px;font-size:9.14px;color:#52ee52;font-weight:normal;transform:scaleX(0.9006);">10.3</span>
<span id="t20" class="t" style="right:1159.5px;transform-origin:100% 50%;top:289.28000000000003px;font-size:9.14px;color:#52ee52;font-weight:normal;transform:scaleX(0.9006);">10.2</span>
<span id="t21" class="t" style="right:1159.5px;transform-origin:100% 50%;top:331.04px;font-size:9.14px;color:#52ee52;font-weight:normal;transform:scaleX(0.9006);">10.1</span>
<span id="t22" class="t" style="right:1159.5px;transform-origin:100% 50%;top:372.8px;font-size:9.14px;color:#52ee52;font-weight:normal;transform:scaleX(0.9006);">10.0</span>
<span id="t23" class="t" style="right:1159.5px;transform-origin:100% 50%;top:414.56000000000006px;font-size:9.14px;color:#52ee52;font-weight:normal;transform:scaleX(0.9064);">9.9</span>
<span id="t24" class="t" style="right:1159.5px;transform-origin:100% 50%;top:456.32000000000005px;font-size:9.14px;color:#52ee52;font-weight:normal;transform:scaleX(0.9064);">9.8</span>
<span id="t25" class="t" style="right:1159.5px;transform-origin:100% 50%;top:498.08000000000004px;font-size:9.14px;color:#52ee52;font-weight:normal;transform:scaleX(0.9064);">9.7</span>
<span id="t26" class="t" style="right:1159.5px;transform-origin:100% 50%;top:539.84px;font-size:9.14px;color:#52ee52;font-weight:normal;transform:scaleX(0.9064);">9.6</span>
<span id="t27" class="t" style="right:1159.5px;transform-origin:100% 50%;top:581.6px;font-size:9.14px;color:#52ee52;font-weight:normal;transform:scaleX(0.9064);">9.5</span>
<span id="t28" class="t" style="left:677.5px;transform-origin:0 50%;top:164.0px;font-size:9.14px;color:#f51cf5;font-weight:normal;transform:scaleX(0.9846);-webkit-text-stroke:0;">7</span>
<span id="t29" class="t" style="left:677.5px;transform-origin:0 50%;top:205.76px;font-size:9.14px;color:#f51cf5;font-weight:normal;transform:scaleX(0.9846);-webkit-text-stroke:0;">6</span>
<span id="t30" class="t" style="left:677.5px;transform-origin:0 50%;top:247.52px;font-size:9.14px;color:#f51cf5;font-weight:normal;transform:scaleX(0.9846);-webkit-text-stroke:0;">5</span>
<span id="t31" class="t" style="left:677.5px;transform-origin:0 50%;top:289.28000000000003px;font-size:9.14px;color:#f51cf5;font-weight:normal;transform:scaleX(0.9846);-webkit-text-stroke:0;">4</span>
<span id="t32" class="t" style="left:677.5px;transform-origin:0 50%;top:331.04px;font-size:9.14px;color:#f51cf5;font-weight:normal;transform:scaleX(0.9846);-webkit-text-stroke:0;">3</span>
<span id="t33" class="t" style="left:677.5px;transform-origin:0 50%;top:372.8px;font-size:9.14px;color:#f51cf5;font-weight:normal;transform:scaleX(0.9846);-webkit-text-stroke:0;">2</span>
<span id="t34" class="t" style="left:677.5px;transform-origin:0 50%;top:414.56000000000006px;font-size:9.14px;color:#f51cf5;font-weight:normal;transform:scaleX(0.9846);-webkit-text-stroke:0;">1</span>
<span id="t35" class="t" style="left:677.5px;transform-origin:0 50%;top:456.32000000000005px;font-size:9.14px;color:#f51cf5;font-weight:normal;transform:scaleX(0.9846);-webkit-text-stroke:0;">0</span>
<span id="t36" class="t" style="left:677.5px;transform-origin:0 50%;top:498.08000000000004px;font-size:9.14px;color:#f51cf5;font-weight:normal;transform:scaleX(1.0462);-webkit-text-stroke:0;">-1</span>
<span id="t37" class="t" style="left:677.5px;transform-origin:0 50%;top:539.84px;font-size:9.14px;color:#f51cf5;font-weight:normal;transform:scaleX(1.0462);-webkit-text-stroke:0;">-2</span>
<span id="t38" class="t" style="left:677.5px;transform-origin:0 50%;top:581.6px;font-size:9.14px;color:#f51cf5;font-weight:normal;transform:scaleX(1.0462);-webkit-text-stroke:0;">-3</span>
<span id="t39" class="t" style="left:84.5px;transform-origin:50% 50%;top:591.8px;font-size:9.14px;color:#f2f2f2;font-weight:normal;transform:translateX(-50%) scaleX(1.0246);">0.0</span>
<span id="t40" class="t" style="left:143.48px;transform-origin:50% 50%;top:591.8px;font-size:9.14px;color:#f2f2f2;font-weight:normal;transform:translateX(-50%) scaleX(0.9631);">600.3</span>
<span id="t41" class="t" style="left:202.45999999999998px;transform-origin:50% 50%;top:591.8px;font-size:9.14px;color:#f2f2f2;font-weight:normal;transform:translateX(-50%) scaleX(0.9670);">1200.6</span>
<span id="t42" class="t" style="left:261.44px;transform-origin:50% 50%;top:591.8px;font-size:9.14px;color:#f2f2f2;font-weight:normal;transform:translateX(-50%) scaleX(0.9670);">1800.8</span>
<span id="t43" class="t" style="left:320.41999999999996px;transform-origin:50% 50%;top:591.8px;font-size:9.14px;color:#f2f2f2;font-weight:normal;transform:translateX(-50%) scaleX(0.9670);">2401.1</span>
<span id="t44" class="t" style="left:379.4px;transform-origin:50% 50%;top:591.8px;font-size:9.14px;color:#f2f2f2;font-weight:normal;transform:translateX(-50%) scaleX(0.9670);">3001.4</span>
<span id="t45" class="t" style="left:438.38px;transform-origin:50% 50%;top:591.8px;font-size:9.14px;color:#f2f2f2;font-weight:normal;transform:translateX(-50%) scaleX(0.9670);">3601.7</span>
<span id="t46" class="t" style="left:497.35999999999996px;transform-origin:50% 50%;top:591.8px;font-size:9.14px;color:#f2f2f2;font-weight:normal;transform:translateX(-50%) scaleX(0.9670);">4201.9</span>
<span id="t47" class="t" style="left:556.3399999999999px;transform-origin:50% 50%;top:591.8px;font-size:9.14px;color:#f2f2f2;font-weight:normal;transform:translateX(-50%) scaleX(0.9670);">4802.2</span>
<span id="t48" class="t" style="left:615.3199999999999px;transform-origin:50% 50%;top:591.8px;font-size:9.14px;color:#f2f2f2;font-weight:normal;transform:translateX(-50%) scaleX(0.9670);">5402.5</span>
<span id="t49" class="t" style="left:674.3px;transform-origin:50% 50%;top:591.8px;font-size:9.14px;color:#f2f2f2;font-weight:normal;transform:translateX(-50%) scaleX(0.9670);">6002.8</span>
<span id="t50" class="t" style="left:379px;transform-origin:50% 50%;top:613.0px;font-size:8.5px;color:#f2f2f2;font-weight:normal;transform:translateX(-50%) scaleX(1.0569);">時間[ms]</span>
<div class="" style="left:84px;top:626px;width:590px;height:13px;background:#c9c9c9;"></div>
<div class="" style="left:84px;top:626px;width:13px;height:13px;background:#ececec;"></div>
<div class="" style="left:661px;top:626px;width:13px;height:13px;background:#ececec;"></div>
<svg style="left:84px;top:626px" width="13" height="13" viewBox="0 0 13 13"><path d="M7.8 3.8 L5 6.5 L7.8 9.2" stroke="#9a9a9a" stroke-width="1" fill="none"/></svg>
<svg style="left:661px;top:626px" width="13" height="13" viewBox="0 0 13 13"><path d="M5.2 3.8 L8 6.5 L5.2 9.2" stroke="#9a9a9a" stroke-width="1" fill="none"/></svg>
<div class="" style="left:46.5px;top:652px;width:10.5px;height:10.5px;background:#fff;border:1px solid #666;"></div>
<svg style="left:46px;top:652px" width="11" height="11" viewBox="0 0 11 11"><path d="M2.4 5.4 L4.6 7.8 L8.6 2.8" stroke="#111" stroke-width="1.3" fill="none"/></svg>
<span id="t51" class="t" style="left:61px;transform-origin:0 50%;top:649.8px;font-size:9px;color:#000;font-weight:normal;transform:scaleX(0.8704);">調整前グラフ</span>
<div class="" style="left:116.5px;top:652px;width:10.5px;height:10.5px;background:#fff;border:1px solid #666;"></div>
<svg style="left:116px;top:652px" width="11" height="11" viewBox="0 0 11 11"><path d="M2.4 5.4 L4.6 7.8 L8.6 2.8" stroke="#111" stroke-width="1.3" fill="none"/></svg>
<span id="t52" class="t" style="left:131px;transform-origin:0 50%;top:649.8px;font-size:9px;color:#000;font-weight:normal;transform:scaleX(0.8704);">調整後グラフ</span>
<div class="grp" style="left:746px;top:70px;width:480px;height:183px;"></div>
<div class="" style="left:751px;top:65px;width:43.5px;height:11px;background:#fff;"></div>
<span id="t53" class="t" style="left:752.5px;transform-origin:0 50%;top:63.5px;font-size:9px;color:#000;font-weight:normal;transform:scaleX(0.8778);">計測・検証</span>
<span id="t54" class="t" style="left:754px;transform-origin:0 50%;top:79.5px;font-size:9px;color:#000;font-weight:normal;transform:scaleX(0.9381);">Pn304 : ジョグ(JOG) 速度</span>
<div class="" style="left:768.5px;top:94px;width:75.5px;height:15.5px;background:#dedede;border:1px solid #111;border-left-color:#8a8a8a;border-right-color:#555;"></div>
<span id="t55" class="t" style="left:772px;transform-origin:0 50%;top:95.7px;font-size:9.67px;color:#666;font-weight:normal;transform:scaleX(0.9302);-webkit-text-stroke:0;">10</span>
<span id="t56" class="t" style="left:848px;transform-origin:0 50%;top:94.0px;font-size:9.67px;color:#111;font-weight:normal;transform:scaleX(0.9825);-webkit-text-stroke:0;">[min-1]</span>
<span id="t57" class="t" style="left:769px;transform-origin:0 50%;top:112.0px;font-size:9px;color:#111;font-weight:normal;transform:scaleX(0.8864);">10[min-1]以下で実施してください。</span>
<svg style="left:752px;top:139px" width="18" height="18" viewBox="0 0 18 18"><defs><radialGradient id="led" cx="50%" cy="42%" r="60%"><stop offset="0" stop-color="#a2f492"/><stop offset="0.4" stop-color="#7fe66c"/><stop offset="0.75" stop-color="#3cc832"/><stop offset="1" stop-color="#25ad22"/></radialGradient></defs><circle cx="9.3" cy="9.3" r="7.2" fill="url(#led)" stroke="#1f9a14" stroke-width="1.2"/></svg>
<div class="btn" style="left:772px;top:140px;width:121px;height:16px;"></div>
<span id="t58" class="t" style="left:833px;transform-origin:50% 50%;top:141.5px;font-size:9px;color:#000;font-weight:normal;transform:translateX(-50%) scaleX(0.7556);">サーボオン</span>
<div class="btn" style="left:840px;top:174px;width:60px;height:45px;"></div>
<span id="t59" class="t" style="left:870px;transform-origin:50% 50%;top:177.5px;font-size:9px;color:#000;font-weight:normal;transform:translateX(-50%) scaleX(1.0556);">正転</span>
<svg style="left:849px;top:191.5px" width="44" height="27" viewBox="0 0 44 27"><path d="M9.5 10.5 V23.9" stroke="#000" stroke-width="4.4"/><path d="M3.1 17.2 H16" stroke="#000" stroke-width="3.9"/><circle cx="27.4" cy="16.2" r="7" fill="#777" stroke="#454545" stroke-width="1.2"/><path d="M37.6 7.4 C33 2.2 24 1.6 18.3 6.8" stroke="#2156c9" stroke-width="2.9" fill="none"/><path d="M12.6 11.4 L15.2 2.8 L22 8.9 Z" fill="#2156c9"/></svg>
<div class="btn" style="left:1072px;top:174px;width:60px;height:45px;"></div>
<span id="t60" class="t" style="left:1102px;transform-origin:50% 50%;top:177.5px;font-size:9px;color:#000;font-weight:normal;transform:translateX(-50%) scaleX(1.0556);">逆転</span>
<svg style="left:1080.7px;top:191.5px" width="44" height="27" viewBox="0 0 44 27"><path d="M27.7 16.7 H40.3" stroke="#000" stroke-width="4.1"/><circle cx="15.3" cy="16.5" r="7" fill="#777" stroke="#454545" stroke-width="1.2"/><path d="M5.2 7.4 C9.8 2.2 18.8 1.6 24.5 6.8" stroke="#2156c9" stroke-width="2.9" fill="none"/><path d="M30.2 11.4 L27.6 2.8 L20.8 8.9 Z" fill="#2156c9"/></svg>
<div class="dis" style="left:1181px;top:93px;width:38px;height:18px;"></div>
<span id="t61" class="t" style="left:1200px;transform-origin:50% 50%;top:94.8px;font-size:9px;color:#8a8a8a;font-weight:normal;transform:translateX(-50%) scaleX(0.9722);">編集</span>
<div class="hl" style="left:1145px;top:120px;width:81px;height:56px;background:#fff;"></div>
<div class="btn" style="left:1151px;top:126px;width:68px;height:45px;"></div>
<span id="t62" class="t" style="left:1185px;transform-origin:50% 50%;top:129.0px;font-size:9px;color:#000;font-weight:normal;transform:translateX(-50%) scaleX(0.8000);">サーボオフ</span>
<svg style="left:1166px;top:142px" width="40" height="28" viewBox="0 0 40 28"><path d="M11.5 10.5 H35.5 V26 H11.5 Z" fill="#5d564a" stroke="#1a1a1a" stroke-width="1.4"/><rect x="1.5" y="16" width="6" height="5.2" fill="#fff" stroke="#1a1a1a" stroke-width="1.2"/><rect x="7.5" y="14.4" width="4" height="8.4" fill="#333"/><circle cx="23.4" cy="11" r="8.2" fill="#fff" stroke="#111" stroke-width="2.2"/></svg>
<div class="btn" style="left:1102px;top:224px;width:113px;height:18px;"></div>
<span id="t63" class="t" style="left:1158.5px;transform-origin:50% 50%;top:226.0px;font-size:9px;color:#000;font-weight:normal;transform:translateX(-50%) scaleX(0.9091);">さらに調整が必要な場合</span>
<svg style="left:850px;top:333px" width="28" height="16" viewBox="0 0 28 16"><path d="M1.5 1.8 H26.3 L13.9 13.8 Z" fill="#000"/></svg>
<svg style="left:1095px;top:333px" width="28" height="16" viewBox="0 0 28 16"><path d="M1.7 14.6 H26.5 L14.1 2.6 Z" fill="#000"/></svg>
<div class="grp" style="left:746px;top:435px;width:480px;height:67px;"></div>
<div class="" style="left:751px;top:430px;width:47.5px;height:11px;background:#fff;"></div>
<span id="t64" class="t" style="left:752.5px;transform-origin:0 50%;top:428.5px;font-size:9px;color:#000;font-weight:normal;transform:scaleX(0.9667);">結果書込み</span>
<div class="dis" style="left:948px;top:447px;width:76px;height:45px;"></div>
<span id="t65" class="t" style="left:986px;transform-origin:50% 50%;top:451.5px;font-size:9px;color:#858585;font-weight:normal;transform:translateX(-50%) scaleX(0.8492);">サーボへ書込み</span>
<svg style="left:968px;top:463px" width="38" height="28" viewBox="0 0 38 28"><defs><linearGradient id="wa" x1="0" y1="0" x2="1" y2="0"><stop offset="0" stop-color="#cfe0fa"/><stop offset="0.35" stop-color="#3f6fe0"/><stop offset="1" stop-color="#1c4bd0"/></linearGradient></defs><rect x="26.1" y="4.1" width="8.5" height="19.6" fill="#f8f8f8" stroke="#333" stroke-width="1.1"/><path d="M26.5 8.9 H34.2" stroke="#555" stroke-width="1"/><path d="M31.5 12.5 V20.5" stroke="#333" stroke-width="1.1"/><rect x="15.7" y="13.3" width="10.4" height="10.4" fill="#6b5c44" stroke="#1c1c1c" stroke-width="1.1"/><rect x="13.3" y="15.6" width="2.6" height="6" fill="#111"/><rect x="9.4" y="16.9" width="4" height="3.6" fill="#fff" stroke="#222" stroke-width="0.9"/><path d="M3.5 6.9 C7 2.4 13 2.3 16.6 5.4 L19.9 2.5 L23.1 13.7 L11.5 9.7 L14.6 7.5 C11.5 5.4 7.5 5.5 4.3 7.8 Z" fill="url(#wa)"/></svg>
<svg style="left:972px;top:582px" width="28" height="16" viewBox="0 0 28 16"><path d="M2.4 1.9 H25.2 L13.8 13.4 Z" fill="#8eed8e" stroke="#1c2c1c" stroke-width="1"/></svg>
<div class="grp" style="left:746px;top:684px;width:480px;height:38px;"></div>
<div class="" style="left:751px;top:679px;width:21.5px;height:11px;background:#fff;"></div>
<span id="t66" class="t" style="left:752.5px;transform-origin:0 50%;top:676.7px;font-size:9px;color:#000;font-weight:normal;transform:scaleX(0.9722);">確定</span>
<div class="btn" style="left:761px;top:694px;width:60px;height:18px;"></div>
<span id="t67" class="t" style="left:791px;transform-origin:50% 50%;top:696.5px;font-size:9px;color:#000;font-weight:normal;transform:translateX(-50%) scaleX(0.9444);">元に戻す</span>
<div class="hl" style="left:1145px;top:687px;width:73px;height:32px;background:#fff;"></div>
<div class="btn" style="left:1151px;top:694px;width:60px;height:18px;"></div>
<span id="t68" class="t" style="left:1181px;transform-origin:50% 50%;top:696.5px;font-size:9px;color:#000;font-weight:normal;transform:translateX(-50%) scaleX(1.0000);">調整完了</span>
<span id="t69" class="t" style="right:16px;transform-origin:100% 50%;top:727.0px;font-size:9px;color:#000;font-weight:normal;transform:scaleX(0.8756);">補償モード : モード1</span>
<div class="grp" style="left:13px;top:684px;width:358px;height:38px;"></div>
<div class="" style="left:18px;top:679px;width:90px;height:11px;background:#fff;"></div>
<span id="t70" class="t" style="left:19.5px;transform-origin:0 50%;top:676.7px;font-size:9px;color:#000;font-weight:normal;transform:scaleX(0.8348);">フィードバック速度p-p値</span>
<span id="t71" class="t" style="left:21px;transform-origin:0 50%;top:691.0px;font-size:9px;color:#000;font-weight:normal;transform:scaleX(1.0000);">調整前</span>
<span id="t72" class="t" style="left:55px;transform-origin:0 50%;top:691.0px;font-size:9.67px;color:#000;font-weight:normal;transform:scaleX(0.9141);-webkit-text-stroke:0;">0.199645757675171</span>
<span id="t73" class="t" style="left:140px;transform-origin:0 50%;top:691.0px;font-size:9.67px;color:#222;font-weight:normal;transform:scaleX(0.9745);-webkit-text-stroke:0;">[ min-1 ]</span>
<span id="t74" class="t" style="left:21px;transform-origin:0 50%;top:704.0px;font-size:9px;color:#000;font-weight:normal;transform:scaleX(1.0000);">調整後</span>
<span id="t75" class="t" style="left:55px;transform-origin:0 50%;top:704.0px;font-size:9.67px;color:#000;font-weight:normal;transform:scaleX(0.9044);-webkit-text-stroke:0;">0.0830709934234619</span>
<span id="t76" class="t" style="left:145px;transform-origin:0 50%;top:704.0px;font-size:9.67px;color:#222;font-weight:normal;transform:scaleX(0.9745);-webkit-text-stroke:0;">[ min-1 ]</span>
<div class="grp" style="left:380px;top:684px;width:357px;height:38px;"></div>
<div class="" style="left:385px;top:679px;width:54px;height:11px;background:#fff;"></div>
<span id="t77" class="t" style="left:386.5px;transform-origin:0 50%;top:676.7px;font-size:9px;color:#000;font-weight:normal;transform:scaleX(0.7937);">エンコーダ情報</span>
<span id="t78" class="t" style="left:388px;transform-origin:0 50%;top:690.5px;font-size:9px;color:#000;font-weight:normal;transform:scaleX(1.0000);">対象</span>
<span id="t79" class="t" style="left:440px;transform-origin:0 50%;top:690.5px;font-size:9px;color:#000;font-weight:normal;transform:scaleX(0.7222);">モータエンコーダ</span>
<span id="t80" class="t" style="left:388px;transform-origin:0 50%;top:704.0px;font-size:9px;color:#000;font-weight:normal;transform:scaleX(1.0000);">分解能</span>
<span id="t81" class="t" style="left:440px;transform-origin:0 50%;top:704.0px;font-size:9.67px;color:#000;font-weight:normal;transform:scaleX(0.9204);-webkit-text-stroke:0;">67108864 [Pulse/rev]</span>
</body></html>
